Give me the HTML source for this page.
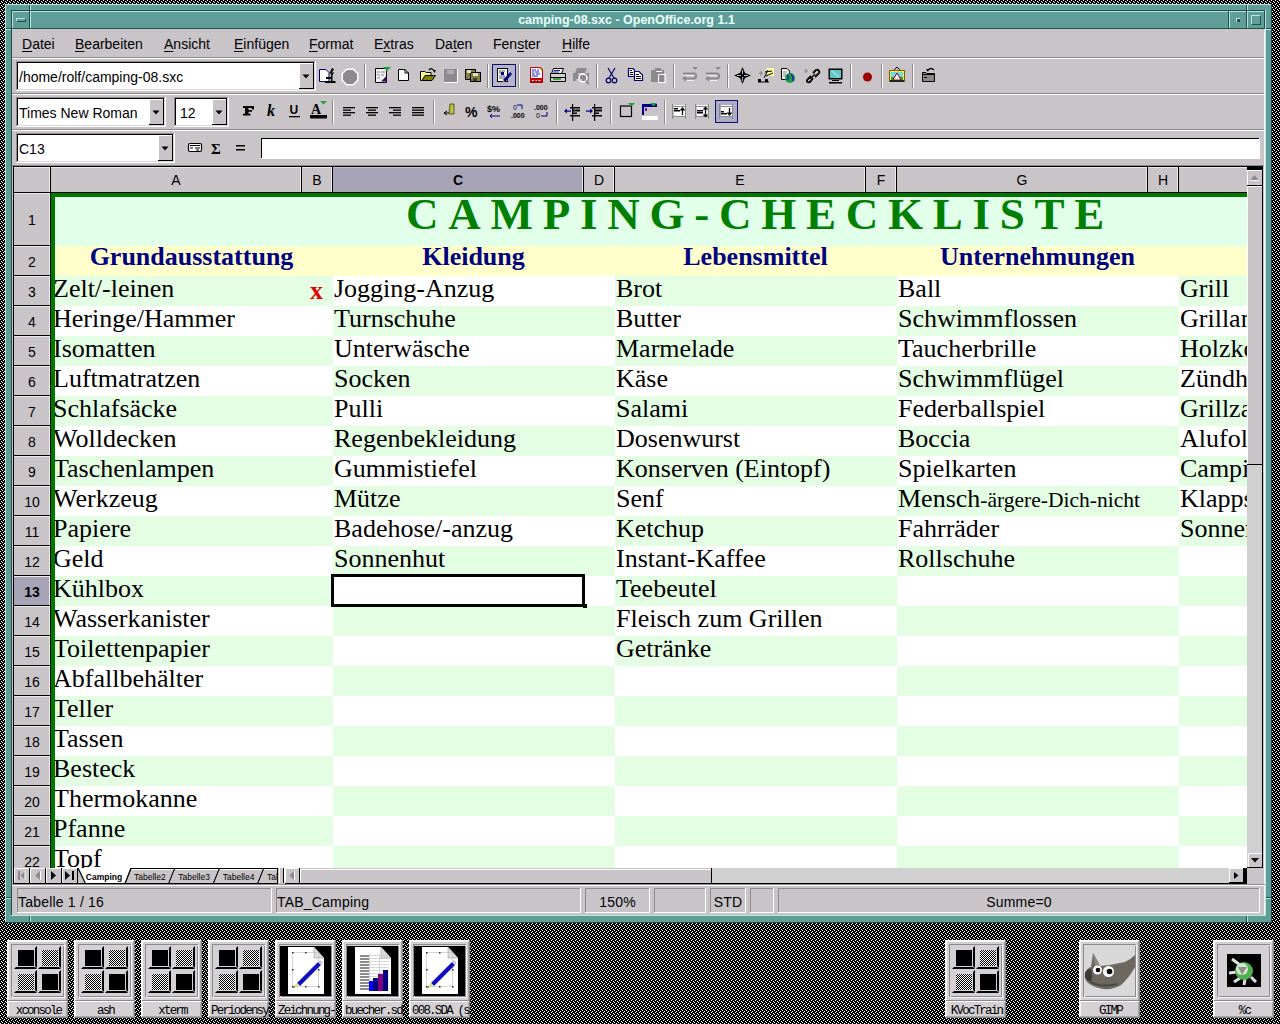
<!DOCTYPE html>
<html><head><meta charset="utf-8">
<style>
*{margin:0;padding:0;box-sizing:border-box}
html,body{width:1280px;height:1024px;overflow:hidden;position:relative;font-family:"Liberation Sans",sans-serif}
body{background:#000}
.a{position:absolute}
.t{white-space:nowrap;line-height:1}
.s{font-family:"Liberation Serif",serif}
.m{font-family:"Liberation Mono",monospace}
u{text-decoration:underline;text-underline-offset:2px}
</style></head><body>

<svg class="a" style="left:0;top:0" width="1280" height="1024"><defs><pattern id="p" width="4" height="4" patternUnits="userSpaceOnUse"><rect x="1" y="1" width="1" height="1" fill="#fff"/><rect x="2" y="2" width="1" height="1" fill="#fff"/><rect x="0" y="3" width="1" height="1" fill="#fff"/><rect x="3" y="0" width="1" height="1" fill="#fff"/></pattern></defs><rect width="1280" height="1024" fill="url(#p)"/></svg>
<div class="a" style="left:5px;top:4px;width:1267px;height:919px;background:#5f9e98"></div>
<div class="a" style="left:5px;top:4px;width:1266px;height:1px;background:#b8e4e0"></div>
<div class="a" style="left:5px;top:4px;width:1px;height:918px;background:#b8e4e0"></div>
<div class="a" style="left:5px;top:922px;width:1267px;height:1px;background:#1f4f4a"></div>
<div class="a" style="left:1271px;top:4px;width:1px;height:919px;background:#1f4f4a"></div>
<div class="a" style="left:11px;top:10px;width:1254px;height:1px;background:#1f4f4a"></div>
<div class="a" style="left:11px;top:10px;width:1px;height:905px;background:#1f4f4a"></div>
<div class="a" style="left:11px;top:915px;width:1255px;height:1px;background:#b8e4e0"></div>
<div class="a" style="left:1265px;top:10px;width:1px;height:906px;background:#b8e4e0"></div>
<div class="a" style="left:29px;top:5px;width:1px;height:5px;background:#1f4f4a"></div>
<div class="a" style="left:30px;top:5px;width:1px;height:5px;background:#b8e4e0"></div>
<div class="a" style="left:29px;top:916px;width:1px;height:6px;background:#1f4f4a"></div>
<div class="a" style="left:30px;top:916px;width:1px;height:6px;background:#b8e4e0"></div>
<div class="a" style="left:1246px;top:5px;width:1px;height:5px;background:#1f4f4a"></div>
<div class="a" style="left:1247px;top:5px;width:1px;height:5px;background:#b8e4e0"></div>
<div class="a" style="left:1246px;top:916px;width:1px;height:6px;background:#1f4f4a"></div>
<div class="a" style="left:1247px;top:916px;width:1px;height:6px;background:#b8e4e0"></div>
<div class="a" style="left:6px;top:28px;width:5px;height:1px;background:#1f4f4a"></div>
<div class="a" style="left:6px;top:29px;width:5px;height:1px;background:#b8e4e0"></div>
<div class="a" style="left:1266px;top:28px;width:5px;height:1px;background:#1f4f4a"></div>
<div class="a" style="left:1266px;top:29px;width:5px;height:1px;background:#b8e4e0"></div>
<div class="a" style="left:6px;top:897px;width:5px;height:1px;background:#1f4f4a"></div>
<div class="a" style="left:6px;top:898px;width:5px;height:1px;background:#b8e4e0"></div>
<div class="a" style="left:1266px;top:897px;width:5px;height:1px;background:#1f4f4a"></div>
<div class="a" style="left:1266px;top:898px;width:5px;height:1px;background:#b8e4e0"></div>
<div class="a" style="left:12px;top:11px;width:1253px;height:18px;background:#5f9e98"></div>
<div class="a" style="left:12px;top:11px;width:18px;height:1px;background:#b8e4e0"></div>
<div class="a" style="left:12px;top:11px;width:1px;height:18px;background:#b8e4e0"></div>
<div class="a" style="left:12px;top:28px;width:18px;height:1px;background:#1f4f4a"></div>
<div class="a" style="left:29px;top:11px;width:1px;height:18px;background:#1f4f4a"></div>
<div class="a" style="left:30px;top:11px;width:1199px;height:1px;background:#b8e4e0"></div>
<div class="a" style="left:30px;top:11px;width:1px;height:18px;background:#b8e4e0"></div>
<div class="a" style="left:30px;top:28px;width:1199px;height:1px;background:#1f4f4a"></div>
<div class="a" style="left:1228px;top:11px;width:1px;height:18px;background:#1f4f4a"></div>
<div class="a" style="left:1229px;top:11px;width:18px;height:1px;background:#b8e4e0"></div>
<div class="a" style="left:1229px;top:11px;width:1px;height:18px;background:#b8e4e0"></div>
<div class="a" style="left:1229px;top:28px;width:18px;height:1px;background:#1f4f4a"></div>
<div class="a" style="left:1246px;top:11px;width:1px;height:18px;background:#1f4f4a"></div>
<div class="a" style="left:1247px;top:11px;width:18px;height:1px;background:#b8e4e0"></div>
<div class="a" style="left:1247px;top:11px;width:1px;height:18px;background:#b8e4e0"></div>
<div class="a" style="left:1247px;top:28px;width:18px;height:1px;background:#1f4f4a"></div>
<div class="a" style="left:1264px;top:11px;width:1px;height:18px;background:#1f4f4a"></div>
<div class="a" style="left:16px;top:18px;width:10px;height:4px;background:#5f9e98;border-top:1px solid #b8e4e0;border-left:1px solid #b8e4e0;border-bottom:1px solid #1f4f4a;border-right:1px solid #1f4f4a"></div>
<div class="a" style="left:1236px;top:18px;width:4px;height:4px;background:#1f4f4a;border-top:1px solid #b8e4e0;border-left:1px solid #b8e4e0"></div>
<div class="a" style="left:1251px;top:15px;width:10px;height:10px;border-top:1px solid #b8e4e0;border-left:1px solid #b8e4e0;border-bottom:1px solid #1f4f4a;border-right:1px solid #1f4f4a"></div>
<div class="a t" style="left:27px;top:14px;width:1199px;text-align:center;color:#eafffc;font-weight:bold;font-size:12.5px">camping-08.sxc - OpenOffice.org 1.1</div>
<div class="a" style="left:12px;top:29px;width:1253px;height:886px;background:#c8c4c8"></div>
<div class="a" style="left:12px;top:57px;width:1253px;height:1px;background:#8c8a8c"></div>
<div class="a t" style="left:22px;top:37px;font-size:14px;color:#000"><u>D</u>atei</div>
<div class="a t" style="left:75px;top:37px;font-size:14px;color:#000"><u>B</u>earbeiten</div>
<div class="a t" style="left:164px;top:37px;font-size:14px;color:#000"><u>A</u>nsicht</div>
<div class="a t" style="left:234px;top:37px;font-size:14px;color:#000"><u>E</u>infügen</div>
<div class="a t" style="left:309px;top:37px;font-size:14px;color:#000"><u>F</u>ormat</div>
<div class="a t" style="left:374px;top:37px;font-size:14px;color:#000">E<u>x</u>tras</div>
<div class="a t" style="left:435px;top:37px;font-size:14px;color:#000">Da<u>t</u>en</div>
<div class="a t" style="left:493px;top:37px;font-size:14px;color:#000">Fen<u>s</u>ter</div>
<div class="a t" style="left:562px;top:37px;font-size:14px;color:#000"><u>H</u>ilfe</div>
<div class="a" style="left:12px;top:58px;width:1253px;height:1px;background:#fff"></div>
<div class="a" style="left:12px;top:93px;width:1253px;height:1px;background:#8c8a8c"></div>
<div class="a" style="left:12px;top:94px;width:1253px;height:1px;background:#fff"></div>
<div class="a" style="left:12px;top:129px;width:1253px;height:1px;background:#8c8a8c"></div>
<div class="a" style="left:12px;top:130px;width:1253px;height:1px;background:#fff"></div>
<div class="a" style="left:12px;top:165px;width:1253px;height:1px;background:#8c8a8c"></div>
<div class="a" style="left:16px;top:61px;width:300px;height:30px;background:#fff"></div>
<div class="a" style="left:16px;top:61px;width:299px;height:1px;background:#8c8a8c"></div>
<div class="a" style="left:16px;top:61px;width:1px;height:29px;background:#8c8a8c"></div>
<div class="a" style="left:17px;top:62px;width:298px;height:1px;background:#000"></div>
<div class="a" style="left:17px;top:62px;width:1px;height:28px;background:#000"></div>
<div class="a" style="left:16px;top:90px;width:300px;height:1px;background:#fff"></div>
<div class="a" style="left:315px;top:61px;width:1px;height:30px;background:#fff"></div>
<div class="a" style="left:17px;top:89px;width:298px;height:1px;background:#dcd8dc"></div>
<div class="a" style="left:314px;top:62px;width:1px;height:28px;background:#dcd8dc"></div>
<div class="a" style="left:299px;top:63px;width:15px;height:26px;background:#c8c4c8"></div>
<div class="a" style="left:299px;top:63px;width:14px;height:1px;background:#fff"></div>
<div class="a" style="left:299px;top:63px;width:1px;height:25px;background:#fff"></div>
<div class="a" style="left:299px;top:88px;width:15px;height:1px;background:#000"></div>
<div class="a" style="left:313px;top:63px;width:1px;height:26px;background:#000"></div>
<svg class="a" style="left:302px;top:74px" width="9" height="5"><path d="M0.5 0.5H7.5L4 4.5Z" fill="#000"/></svg>
<div class="a t" style="left:19px;top:70px;font-size:14px;color:#000">/home/rolf/camping-08.sxc</div>
<div class="a" style="left:16px;top:97px;width:150px;height:30px;background:#fff"></div>
<div class="a" style="left:16px;top:97px;width:149px;height:1px;background:#8c8a8c"></div>
<div class="a" style="left:16px;top:97px;width:1px;height:29px;background:#8c8a8c"></div>
<div class="a" style="left:17px;top:98px;width:148px;height:1px;background:#000"></div>
<div class="a" style="left:17px;top:98px;width:1px;height:28px;background:#000"></div>
<div class="a" style="left:16px;top:126px;width:150px;height:1px;background:#fff"></div>
<div class="a" style="left:165px;top:97px;width:1px;height:30px;background:#fff"></div>
<div class="a" style="left:17px;top:125px;width:148px;height:1px;background:#dcd8dc"></div>
<div class="a" style="left:164px;top:98px;width:1px;height:28px;background:#dcd8dc"></div>
<div class="a" style="left:149px;top:99px;width:15px;height:26px;background:#c8c4c8"></div>
<div class="a" style="left:149px;top:99px;width:14px;height:1px;background:#fff"></div>
<div class="a" style="left:149px;top:99px;width:1px;height:25px;background:#fff"></div>
<div class="a" style="left:149px;top:124px;width:15px;height:1px;background:#000"></div>
<div class="a" style="left:163px;top:99px;width:1px;height:26px;background:#000"></div>
<svg class="a" style="left:152px;top:110px" width="9" height="5"><path d="M0.5 0.5H7.5L4 4.5Z" fill="#000"/></svg>
<div class="a t" style="left:19px;top:106px;font-size:14px;color:#000">Times New Roman</div>
<div class="a" style="left:174px;top:97px;width:55px;height:30px;background:#fff"></div>
<div class="a" style="left:174px;top:97px;width:54px;height:1px;background:#8c8a8c"></div>
<div class="a" style="left:174px;top:97px;width:1px;height:29px;background:#8c8a8c"></div>
<div class="a" style="left:175px;top:98px;width:53px;height:1px;background:#000"></div>
<div class="a" style="left:175px;top:98px;width:1px;height:28px;background:#000"></div>
<div class="a" style="left:174px;top:126px;width:55px;height:1px;background:#fff"></div>
<div class="a" style="left:228px;top:97px;width:1px;height:30px;background:#fff"></div>
<div class="a" style="left:175px;top:125px;width:53px;height:1px;background:#dcd8dc"></div>
<div class="a" style="left:227px;top:98px;width:1px;height:28px;background:#dcd8dc"></div>
<div class="a" style="left:212px;top:99px;width:15px;height:26px;background:#c8c4c8"></div>
<div class="a" style="left:212px;top:99px;width:14px;height:1px;background:#fff"></div>
<div class="a" style="left:212px;top:99px;width:1px;height:25px;background:#fff"></div>
<div class="a" style="left:212px;top:124px;width:15px;height:1px;background:#000"></div>
<div class="a" style="left:226px;top:99px;width:1px;height:26px;background:#000"></div>
<svg class="a" style="left:215px;top:110px" width="9" height="5"><path d="M0.5 0.5H7.5L4 4.5Z" fill="#000"/></svg>
<div class="a t" style="left:180px;top:106px;font-size:14px;color:#000">12</div>
<div class="a" style="left:16px;top:133px;width:159px;height:30px;background:#fff"></div>
<div class="a" style="left:16px;top:133px;width:158px;height:1px;background:#8c8a8c"></div>
<div class="a" style="left:16px;top:133px;width:1px;height:29px;background:#8c8a8c"></div>
<div class="a" style="left:17px;top:134px;width:157px;height:1px;background:#000"></div>
<div class="a" style="left:17px;top:134px;width:1px;height:28px;background:#000"></div>
<div class="a" style="left:16px;top:162px;width:159px;height:1px;background:#fff"></div>
<div class="a" style="left:174px;top:133px;width:1px;height:30px;background:#fff"></div>
<div class="a" style="left:17px;top:161px;width:157px;height:1px;background:#dcd8dc"></div>
<div class="a" style="left:173px;top:134px;width:1px;height:28px;background:#dcd8dc"></div>
<div class="a" style="left:158px;top:135px;width:15px;height:26px;background:#c8c4c8"></div>
<div class="a" style="left:158px;top:135px;width:14px;height:1px;background:#fff"></div>
<div class="a" style="left:158px;top:135px;width:1px;height:25px;background:#fff"></div>
<div class="a" style="left:158px;top:160px;width:15px;height:1px;background:#000"></div>
<div class="a" style="left:172px;top:135px;width:1px;height:26px;background:#000"></div>
<svg class="a" style="left:161px;top:146px" width="9" height="5"><path d="M0.5 0.5H7.5L4 4.5Z" fill="#000"/></svg>
<div class="a t" style="left:19px;top:142px;font-size:14px;color:#000">C13</div>
<div class="a" style="left:261px;top:138px;width:999px;height:21px;background:#fff"></div>
<div class="a" style="left:261px;top:138px;width:998px;height:1px;background:#000"></div>
<div class="a" style="left:261px;top:138px;width:1px;height:20px;background:#000"></div>
<div class="a" style="left:261px;top:158px;width:999px;height:1px;background:#fff"></div>
<div class="a" style="left:1259px;top:138px;width:1px;height:21px;background:#fff"></div>
<div class="a" style="left:13px;top:166px;width:1234px;height:702px;background:#c8c4c8"></div>
<div class="a" style="left:13px;top:166px;width:1234px;height:1px;background:#000"></div>
<div class="a" style="left:13px;top:166px;width:1px;height:702px;background:#000"></div>
<div class="a" style="left:14px;top:167px;width:36px;height:1px;background:#ebe9eb"></div>
<div class="a" style="left:49px;top:167px;width:1px;height:25px;background:#ebe9eb"></div>
<div class="a" style="left:13px;top:192px;width:38px;height:1px;background:#000"></div>
<div class="a" style="left:50px;top:166px;width:1px;height:27px;background:#000"></div>
<div class="a" style="left:51px;top:167px;width:251px;height:25px;background:#c8c4c8"></div>
<div class="a" style="left:51px;top:167px;width:251px;height:1px;background:#ebe9eb"></div>
<div class="a" style="left:301px;top:167px;width:1px;height:25px;background:#000"></div>
<div class="a" style="left:300px;top:167px;width:1px;height:25px;background:#ebe9eb"></div>
<div class="a" style="left:51px;top:192px;width:251px;height:1px;background:#000"></div>
<div class="a t" style="left:51px;top:173px;width:250px;text-align:center;font-size:14px;color:#000;font-weight:normal">A</div>
<div class="a" style="left:302px;top:167px;width:31px;height:25px;background:#c8c4c8"></div>
<div class="a" style="left:302px;top:167px;width:31px;height:1px;background:#ebe9eb"></div>
<div class="a" style="left:332px;top:167px;width:1px;height:25px;background:#000"></div>
<div class="a" style="left:331px;top:167px;width:1px;height:25px;background:#ebe9eb"></div>
<div class="a" style="left:302px;top:192px;width:31px;height:1px;background:#000"></div>
<div class="a t" style="left:302px;top:173px;width:30px;text-align:center;font-size:14px;color:#000;font-weight:normal">B</div>
<div class="a" style="left:333px;top:167px;width:251px;height:25px;background:#a8a4b8"></div>
<div class="a" style="left:333px;top:167px;width:251px;height:1px;background:#c4c0d4"></div>
<div class="a" style="left:583px;top:167px;width:1px;height:25px;background:#000"></div>
<div class="a" style="left:582px;top:167px;width:1px;height:25px;background:#ebe9eb"></div>
<div class="a" style="left:333px;top:192px;width:251px;height:1px;background:#000"></div>
<div class="a t" style="left:333px;top:173px;width:250px;text-align:center;font-size:14px;color:#000;font-weight:bold">C</div>
<div class="a" style="left:584px;top:167px;width:31px;height:25px;background:#c8c4c8"></div>
<div class="a" style="left:584px;top:167px;width:31px;height:1px;background:#ebe9eb"></div>
<div class="a" style="left:614px;top:167px;width:1px;height:25px;background:#000"></div>
<div class="a" style="left:613px;top:167px;width:1px;height:25px;background:#ebe9eb"></div>
<div class="a" style="left:584px;top:192px;width:31px;height:1px;background:#000"></div>
<div class="a t" style="left:584px;top:173px;width:30px;text-align:center;font-size:14px;color:#000;font-weight:normal">D</div>
<div class="a" style="left:615px;top:167px;width:251px;height:25px;background:#c8c4c8"></div>
<div class="a" style="left:615px;top:167px;width:251px;height:1px;background:#ebe9eb"></div>
<div class="a" style="left:865px;top:167px;width:1px;height:25px;background:#000"></div>
<div class="a" style="left:864px;top:167px;width:1px;height:25px;background:#ebe9eb"></div>
<div class="a" style="left:615px;top:192px;width:251px;height:1px;background:#000"></div>
<div class="a t" style="left:615px;top:173px;width:250px;text-align:center;font-size:14px;color:#000;font-weight:normal">E</div>
<div class="a" style="left:866px;top:167px;width:31px;height:25px;background:#c8c4c8"></div>
<div class="a" style="left:866px;top:167px;width:31px;height:1px;background:#ebe9eb"></div>
<div class="a" style="left:896px;top:167px;width:1px;height:25px;background:#000"></div>
<div class="a" style="left:895px;top:167px;width:1px;height:25px;background:#ebe9eb"></div>
<div class="a" style="left:866px;top:192px;width:31px;height:1px;background:#000"></div>
<div class="a t" style="left:866px;top:173px;width:30px;text-align:center;font-size:14px;color:#000;font-weight:normal">F</div>
<div class="a" style="left:897px;top:167px;width:251px;height:25px;background:#c8c4c8"></div>
<div class="a" style="left:897px;top:167px;width:251px;height:1px;background:#ebe9eb"></div>
<div class="a" style="left:1147px;top:167px;width:1px;height:25px;background:#000"></div>
<div class="a" style="left:1146px;top:167px;width:1px;height:25px;background:#ebe9eb"></div>
<div class="a" style="left:897px;top:192px;width:251px;height:1px;background:#000"></div>
<div class="a t" style="left:897px;top:173px;width:250px;text-align:center;font-size:14px;color:#000;font-weight:normal">G</div>
<div class="a" style="left:1148px;top:167px;width:31px;height:25px;background:#c8c4c8"></div>
<div class="a" style="left:1148px;top:167px;width:31px;height:1px;background:#ebe9eb"></div>
<div class="a" style="left:1178px;top:167px;width:1px;height:25px;background:#000"></div>
<div class="a" style="left:1177px;top:167px;width:1px;height:25px;background:#ebe9eb"></div>
<div class="a" style="left:1148px;top:192px;width:31px;height:1px;background:#000"></div>
<div class="a t" style="left:1148px;top:173px;width:30px;text-align:center;font-size:14px;color:#000;font-weight:normal">H</div>
<div class="a" style="left:1179px;top:167px;width:68px;height:25px;background:#c8c4c8"></div>
<div class="a" style="left:1179px;top:167px;width:68px;height:1px;background:#ebe9eb"></div>
<div class="a" style="left:1179px;top:192px;width:68px;height:1px;background:#000"></div>
<div class="a" style="left:14px;top:193px;width:36px;height:53px;background:#c8c4c8"></div>
<div class="a" style="left:14px;top:193px;width:35px;height:1px;background:#ebe9eb"></div>
<div class="a" style="left:49px;top:193px;width:1px;height:53px;background:#ebe9eb"></div>
<div class="a" style="left:13px;top:245px;width:38px;height:1px;background:#000"></div>
<div class="a t" style="left:14px;top:213px;width:36px;text-align:center;font-size:14px;color:#000;font-weight:normal">1</div>
<div class="a" style="left:14px;top:246px;width:36px;height:30px;background:#c8c4c8"></div>
<div class="a" style="left:14px;top:246px;width:35px;height:1px;background:#ebe9eb"></div>
<div class="a" style="left:49px;top:246px;width:1px;height:30px;background:#ebe9eb"></div>
<div class="a" style="left:13px;top:275px;width:38px;height:1px;background:#000"></div>
<div class="a t" style="left:14px;top:255px;width:36px;text-align:center;font-size:14px;color:#000;font-weight:normal">2</div>
<div class="a" style="left:14px;top:276px;width:36px;height:30px;background:#c8c4c8"></div>
<div class="a" style="left:14px;top:276px;width:35px;height:1px;background:#ebe9eb"></div>
<div class="a" style="left:49px;top:276px;width:1px;height:30px;background:#ebe9eb"></div>
<div class="a" style="left:13px;top:305px;width:38px;height:1px;background:#000"></div>
<div class="a t" style="left:14px;top:285px;width:36px;text-align:center;font-size:14px;color:#000;font-weight:normal">3</div>
<div class="a" style="left:14px;top:306px;width:36px;height:30px;background:#c8c4c8"></div>
<div class="a" style="left:14px;top:306px;width:35px;height:1px;background:#ebe9eb"></div>
<div class="a" style="left:49px;top:306px;width:1px;height:30px;background:#ebe9eb"></div>
<div class="a" style="left:13px;top:335px;width:38px;height:1px;background:#000"></div>
<div class="a t" style="left:14px;top:315px;width:36px;text-align:center;font-size:14px;color:#000;font-weight:normal">4</div>
<div class="a" style="left:14px;top:336px;width:36px;height:30px;background:#c8c4c8"></div>
<div class="a" style="left:14px;top:336px;width:35px;height:1px;background:#ebe9eb"></div>
<div class="a" style="left:49px;top:336px;width:1px;height:30px;background:#ebe9eb"></div>
<div class="a" style="left:13px;top:365px;width:38px;height:1px;background:#000"></div>
<div class="a t" style="left:14px;top:345px;width:36px;text-align:center;font-size:14px;color:#000;font-weight:normal">5</div>
<div class="a" style="left:14px;top:366px;width:36px;height:30px;background:#c8c4c8"></div>
<div class="a" style="left:14px;top:366px;width:35px;height:1px;background:#ebe9eb"></div>
<div class="a" style="left:49px;top:366px;width:1px;height:30px;background:#ebe9eb"></div>
<div class="a" style="left:13px;top:395px;width:38px;height:1px;background:#000"></div>
<div class="a t" style="left:14px;top:375px;width:36px;text-align:center;font-size:14px;color:#000;font-weight:normal">6</div>
<div class="a" style="left:14px;top:396px;width:36px;height:30px;background:#c8c4c8"></div>
<div class="a" style="left:14px;top:396px;width:35px;height:1px;background:#ebe9eb"></div>
<div class="a" style="left:49px;top:396px;width:1px;height:30px;background:#ebe9eb"></div>
<div class="a" style="left:13px;top:425px;width:38px;height:1px;background:#000"></div>
<div class="a t" style="left:14px;top:405px;width:36px;text-align:center;font-size:14px;color:#000;font-weight:normal">7</div>
<div class="a" style="left:14px;top:426px;width:36px;height:30px;background:#c8c4c8"></div>
<div class="a" style="left:14px;top:426px;width:35px;height:1px;background:#ebe9eb"></div>
<div class="a" style="left:49px;top:426px;width:1px;height:30px;background:#ebe9eb"></div>
<div class="a" style="left:13px;top:455px;width:38px;height:1px;background:#000"></div>
<div class="a t" style="left:14px;top:435px;width:36px;text-align:center;font-size:14px;color:#000;font-weight:normal">8</div>
<div class="a" style="left:14px;top:456px;width:36px;height:30px;background:#c8c4c8"></div>
<div class="a" style="left:14px;top:456px;width:35px;height:1px;background:#ebe9eb"></div>
<div class="a" style="left:49px;top:456px;width:1px;height:30px;background:#ebe9eb"></div>
<div class="a" style="left:13px;top:485px;width:38px;height:1px;background:#000"></div>
<div class="a t" style="left:14px;top:465px;width:36px;text-align:center;font-size:14px;color:#000;font-weight:normal">9</div>
<div class="a" style="left:14px;top:486px;width:36px;height:30px;background:#c8c4c8"></div>
<div class="a" style="left:14px;top:486px;width:35px;height:1px;background:#ebe9eb"></div>
<div class="a" style="left:49px;top:486px;width:1px;height:30px;background:#ebe9eb"></div>
<div class="a" style="left:13px;top:515px;width:38px;height:1px;background:#000"></div>
<div class="a t" style="left:14px;top:495px;width:36px;text-align:center;font-size:14px;color:#000;font-weight:normal">10</div>
<div class="a" style="left:14px;top:516px;width:36px;height:30px;background:#c8c4c8"></div>
<div class="a" style="left:14px;top:516px;width:35px;height:1px;background:#ebe9eb"></div>
<div class="a" style="left:49px;top:516px;width:1px;height:30px;background:#ebe9eb"></div>
<div class="a" style="left:13px;top:545px;width:38px;height:1px;background:#000"></div>
<div class="a t" style="left:14px;top:525px;width:36px;text-align:center;font-size:14px;color:#000;font-weight:normal">11</div>
<div class="a" style="left:14px;top:546px;width:36px;height:30px;background:#c8c4c8"></div>
<div class="a" style="left:14px;top:546px;width:35px;height:1px;background:#ebe9eb"></div>
<div class="a" style="left:49px;top:546px;width:1px;height:30px;background:#ebe9eb"></div>
<div class="a" style="left:13px;top:575px;width:38px;height:1px;background:#000"></div>
<div class="a t" style="left:14px;top:555px;width:36px;text-align:center;font-size:14px;color:#000;font-weight:normal">12</div>
<div class="a" style="left:14px;top:576px;width:36px;height:30px;background:#a8a4b8"></div>
<div class="a" style="left:14px;top:576px;width:35px;height:1px;background:#ebe9eb"></div>
<div class="a" style="left:49px;top:576px;width:1px;height:30px;background:#ebe9eb"></div>
<div class="a" style="left:13px;top:605px;width:38px;height:1px;background:#000"></div>
<div class="a t" style="left:14px;top:585px;width:36px;text-align:center;font-size:14px;color:#000;font-weight:bold">13</div>
<div class="a" style="left:14px;top:606px;width:36px;height:30px;background:#c8c4c8"></div>
<div class="a" style="left:14px;top:606px;width:35px;height:1px;background:#ebe9eb"></div>
<div class="a" style="left:49px;top:606px;width:1px;height:30px;background:#ebe9eb"></div>
<div class="a" style="left:13px;top:635px;width:38px;height:1px;background:#000"></div>
<div class="a t" style="left:14px;top:615px;width:36px;text-align:center;font-size:14px;color:#000;font-weight:normal">14</div>
<div class="a" style="left:14px;top:636px;width:36px;height:30px;background:#c8c4c8"></div>
<div class="a" style="left:14px;top:636px;width:35px;height:1px;background:#ebe9eb"></div>
<div class="a" style="left:49px;top:636px;width:1px;height:30px;background:#ebe9eb"></div>
<div class="a" style="left:13px;top:665px;width:38px;height:1px;background:#000"></div>
<div class="a t" style="left:14px;top:645px;width:36px;text-align:center;font-size:14px;color:#000;font-weight:normal">15</div>
<div class="a" style="left:14px;top:666px;width:36px;height:30px;background:#c8c4c8"></div>
<div class="a" style="left:14px;top:666px;width:35px;height:1px;background:#ebe9eb"></div>
<div class="a" style="left:49px;top:666px;width:1px;height:30px;background:#ebe9eb"></div>
<div class="a" style="left:13px;top:695px;width:38px;height:1px;background:#000"></div>
<div class="a t" style="left:14px;top:675px;width:36px;text-align:center;font-size:14px;color:#000;font-weight:normal">16</div>
<div class="a" style="left:14px;top:696px;width:36px;height:30px;background:#c8c4c8"></div>
<div class="a" style="left:14px;top:696px;width:35px;height:1px;background:#ebe9eb"></div>
<div class="a" style="left:49px;top:696px;width:1px;height:30px;background:#ebe9eb"></div>
<div class="a" style="left:13px;top:725px;width:38px;height:1px;background:#000"></div>
<div class="a t" style="left:14px;top:705px;width:36px;text-align:center;font-size:14px;color:#000;font-weight:normal">17</div>
<div class="a" style="left:14px;top:726px;width:36px;height:30px;background:#c8c4c8"></div>
<div class="a" style="left:14px;top:726px;width:35px;height:1px;background:#ebe9eb"></div>
<div class="a" style="left:49px;top:726px;width:1px;height:30px;background:#ebe9eb"></div>
<div class="a" style="left:13px;top:755px;width:38px;height:1px;background:#000"></div>
<div class="a t" style="left:14px;top:735px;width:36px;text-align:center;font-size:14px;color:#000;font-weight:normal">18</div>
<div class="a" style="left:14px;top:756px;width:36px;height:30px;background:#c8c4c8"></div>
<div class="a" style="left:14px;top:756px;width:35px;height:1px;background:#ebe9eb"></div>
<div class="a" style="left:49px;top:756px;width:1px;height:30px;background:#ebe9eb"></div>
<div class="a" style="left:13px;top:785px;width:38px;height:1px;background:#000"></div>
<div class="a t" style="left:14px;top:765px;width:36px;text-align:center;font-size:14px;color:#000;font-weight:normal">19</div>
<div class="a" style="left:14px;top:786px;width:36px;height:30px;background:#c8c4c8"></div>
<div class="a" style="left:14px;top:786px;width:35px;height:1px;background:#ebe9eb"></div>
<div class="a" style="left:49px;top:786px;width:1px;height:30px;background:#ebe9eb"></div>
<div class="a" style="left:13px;top:815px;width:38px;height:1px;background:#000"></div>
<div class="a t" style="left:14px;top:795px;width:36px;text-align:center;font-size:14px;color:#000;font-weight:normal">20</div>
<div class="a" style="left:14px;top:816px;width:36px;height:30px;background:#c8c4c8"></div>
<div class="a" style="left:14px;top:816px;width:35px;height:1px;background:#ebe9eb"></div>
<div class="a" style="left:49px;top:816px;width:1px;height:30px;background:#ebe9eb"></div>
<div class="a" style="left:13px;top:845px;width:38px;height:1px;background:#000"></div>
<div class="a t" style="left:14px;top:825px;width:36px;text-align:center;font-size:14px;color:#000;font-weight:normal">21</div>
<div class="a" style="left:14px;top:846px;width:36px;height:22px;background:#c8c4c8"></div>
<div class="a" style="left:14px;top:846px;width:35px;height:1px;background:#ebe9eb"></div>
<div class="a" style="left:49px;top:846px;width:1px;height:22px;background:#ebe9eb"></div>
<div class="a t" style="left:14px;top:855px;width:36px;text-align:center;font-size:14px;color:#000;font-weight:normal">22</div>
<div class="a" style="left:50px;top:193px;width:1px;height:675px;background:#000"></div>
<div class="a" style="left:51px;top:193px;width:1196px;height:53px;background:#e2ffea"></div>
<div class="a" style="left:51px;top:246px;width:1196px;height:30px;background:#ffffcc"></div>
<div class="a" style="left:51px;top:276px;width:282px;height:30px;background:#e4fee4"></div>
<div class="a" style="left:333px;top:276px;width:282px;height:30px;background:#fff"></div>
<div class="a" style="left:615px;top:276px;width:282px;height:30px;background:#e4fee4"></div>
<div class="a" style="left:897px;top:276px;width:282px;height:30px;background:#fff"></div>
<div class="a" style="left:1179px;top:276px;width:68px;height:30px;background:#e4fee4"></div>
<div class="a" style="left:51px;top:306px;width:282px;height:30px;background:#fff"></div>
<div class="a" style="left:333px;top:306px;width:282px;height:30px;background:#e4fee4"></div>
<div class="a" style="left:615px;top:306px;width:282px;height:30px;background:#fff"></div>
<div class="a" style="left:897px;top:306px;width:282px;height:30px;background:#e4fee4"></div>
<div class="a" style="left:1179px;top:306px;width:68px;height:30px;background:#fff"></div>
<div class="a" style="left:51px;top:336px;width:282px;height:30px;background:#e4fee4"></div>
<div class="a" style="left:333px;top:336px;width:282px;height:30px;background:#fff"></div>
<div class="a" style="left:615px;top:336px;width:282px;height:30px;background:#e4fee4"></div>
<div class="a" style="left:897px;top:336px;width:282px;height:30px;background:#fff"></div>
<div class="a" style="left:1179px;top:336px;width:68px;height:30px;background:#e4fee4"></div>
<div class="a" style="left:51px;top:366px;width:282px;height:30px;background:#fff"></div>
<div class="a" style="left:333px;top:366px;width:282px;height:30px;background:#e4fee4"></div>
<div class="a" style="left:615px;top:366px;width:282px;height:30px;background:#fff"></div>
<div class="a" style="left:897px;top:366px;width:282px;height:30px;background:#e4fee4"></div>
<div class="a" style="left:1179px;top:366px;width:68px;height:30px;background:#fff"></div>
<div class="a" style="left:51px;top:396px;width:282px;height:30px;background:#e4fee4"></div>
<div class="a" style="left:333px;top:396px;width:282px;height:30px;background:#fff"></div>
<div class="a" style="left:615px;top:396px;width:282px;height:30px;background:#e4fee4"></div>
<div class="a" style="left:897px;top:396px;width:282px;height:30px;background:#fff"></div>
<div class="a" style="left:1179px;top:396px;width:68px;height:30px;background:#e4fee4"></div>
<div class="a" style="left:51px;top:426px;width:282px;height:30px;background:#fff"></div>
<div class="a" style="left:333px;top:426px;width:282px;height:30px;background:#e4fee4"></div>
<div class="a" style="left:615px;top:426px;width:282px;height:30px;background:#fff"></div>
<div class="a" style="left:897px;top:426px;width:282px;height:30px;background:#e4fee4"></div>
<div class="a" style="left:1179px;top:426px;width:68px;height:30px;background:#fff"></div>
<div class="a" style="left:51px;top:456px;width:282px;height:30px;background:#e4fee4"></div>
<div class="a" style="left:333px;top:456px;width:282px;height:30px;background:#fff"></div>
<div class="a" style="left:615px;top:456px;width:282px;height:30px;background:#e4fee4"></div>
<div class="a" style="left:897px;top:456px;width:282px;height:30px;background:#fff"></div>
<div class="a" style="left:1179px;top:456px;width:68px;height:30px;background:#e4fee4"></div>
<div class="a" style="left:51px;top:486px;width:282px;height:30px;background:#fff"></div>
<div class="a" style="left:333px;top:486px;width:282px;height:30px;background:#e4fee4"></div>
<div class="a" style="left:615px;top:486px;width:282px;height:30px;background:#fff"></div>
<div class="a" style="left:897px;top:486px;width:282px;height:30px;background:#e4fee4"></div>
<div class="a" style="left:1179px;top:486px;width:68px;height:30px;background:#fff"></div>
<div class="a" style="left:51px;top:516px;width:282px;height:30px;background:#e4fee4"></div>
<div class="a" style="left:333px;top:516px;width:282px;height:30px;background:#fff"></div>
<div class="a" style="left:615px;top:516px;width:282px;height:30px;background:#e4fee4"></div>
<div class="a" style="left:897px;top:516px;width:282px;height:30px;background:#fff"></div>
<div class="a" style="left:1179px;top:516px;width:68px;height:30px;background:#e4fee4"></div>
<div class="a" style="left:51px;top:546px;width:282px;height:30px;background:#fff"></div>
<div class="a" style="left:333px;top:546px;width:282px;height:30px;background:#e4fee4"></div>
<div class="a" style="left:615px;top:546px;width:282px;height:30px;background:#fff"></div>
<div class="a" style="left:897px;top:546px;width:282px;height:30px;background:#e4fee4"></div>
<div class="a" style="left:1179px;top:546px;width:68px;height:30px;background:#fff"></div>
<div class="a" style="left:51px;top:576px;width:282px;height:30px;background:#e4fee4"></div>
<div class="a" style="left:333px;top:576px;width:282px;height:30px;background:#fff"></div>
<div class="a" style="left:615px;top:576px;width:282px;height:30px;background:#e4fee4"></div>
<div class="a" style="left:897px;top:576px;width:282px;height:30px;background:#fff"></div>
<div class="a" style="left:1179px;top:576px;width:68px;height:30px;background:#e4fee4"></div>
<div class="a" style="left:51px;top:606px;width:282px;height:30px;background:#fff"></div>
<div class="a" style="left:333px;top:606px;width:282px;height:30px;background:#e4fee4"></div>
<div class="a" style="left:615px;top:606px;width:282px;height:30px;background:#fff"></div>
<div class="a" style="left:897px;top:606px;width:282px;height:30px;background:#e4fee4"></div>
<div class="a" style="left:1179px;top:606px;width:68px;height:30px;background:#fff"></div>
<div class="a" style="left:51px;top:636px;width:282px;height:30px;background:#e4fee4"></div>
<div class="a" style="left:333px;top:636px;width:282px;height:30px;background:#fff"></div>
<div class="a" style="left:615px;top:636px;width:282px;height:30px;background:#e4fee4"></div>
<div class="a" style="left:897px;top:636px;width:282px;height:30px;background:#fff"></div>
<div class="a" style="left:1179px;top:636px;width:68px;height:30px;background:#e4fee4"></div>
<div class="a" style="left:51px;top:666px;width:282px;height:30px;background:#fff"></div>
<div class="a" style="left:333px;top:666px;width:282px;height:30px;background:#e4fee4"></div>
<div class="a" style="left:615px;top:666px;width:282px;height:30px;background:#fff"></div>
<div class="a" style="left:897px;top:666px;width:282px;height:30px;background:#e4fee4"></div>
<div class="a" style="left:1179px;top:666px;width:68px;height:30px;background:#fff"></div>
<div class="a" style="left:51px;top:696px;width:282px;height:30px;background:#e4fee4"></div>
<div class="a" style="left:333px;top:696px;width:282px;height:30px;background:#fff"></div>
<div class="a" style="left:615px;top:696px;width:282px;height:30px;background:#e4fee4"></div>
<div class="a" style="left:897px;top:696px;width:282px;height:30px;background:#fff"></div>
<div class="a" style="left:1179px;top:696px;width:68px;height:30px;background:#e4fee4"></div>
<div class="a" style="left:51px;top:726px;width:282px;height:30px;background:#fff"></div>
<div class="a" style="left:333px;top:726px;width:282px;height:30px;background:#e4fee4"></div>
<div class="a" style="left:615px;top:726px;width:282px;height:30px;background:#fff"></div>
<div class="a" style="left:897px;top:726px;width:282px;height:30px;background:#e4fee4"></div>
<div class="a" style="left:1179px;top:726px;width:68px;height:30px;background:#fff"></div>
<div class="a" style="left:51px;top:756px;width:282px;height:30px;background:#e4fee4"></div>
<div class="a" style="left:333px;top:756px;width:282px;height:30px;background:#fff"></div>
<div class="a" style="left:615px;top:756px;width:282px;height:30px;background:#e4fee4"></div>
<div class="a" style="left:897px;top:756px;width:282px;height:30px;background:#fff"></div>
<div class="a" style="left:1179px;top:756px;width:68px;height:30px;background:#e4fee4"></div>
<div class="a" style="left:51px;top:786px;width:282px;height:30px;background:#fff"></div>
<div class="a" style="left:333px;top:786px;width:282px;height:30px;background:#e4fee4"></div>
<div class="a" style="left:615px;top:786px;width:282px;height:30px;background:#fff"></div>
<div class="a" style="left:897px;top:786px;width:282px;height:30px;background:#e4fee4"></div>
<div class="a" style="left:1179px;top:786px;width:68px;height:30px;background:#fff"></div>
<div class="a" style="left:51px;top:816px;width:282px;height:30px;background:#e4fee4"></div>
<div class="a" style="left:333px;top:816px;width:282px;height:30px;background:#fff"></div>
<div class="a" style="left:615px;top:816px;width:282px;height:30px;background:#e4fee4"></div>
<div class="a" style="left:897px;top:816px;width:282px;height:30px;background:#fff"></div>
<div class="a" style="left:1179px;top:816px;width:68px;height:30px;background:#e4fee4"></div>
<div class="a" style="left:51px;top:846px;width:282px;height:22px;background:#fff"></div>
<div class="a" style="left:333px;top:846px;width:282px;height:22px;background:#e4fee4"></div>
<div class="a" style="left:615px;top:846px;width:282px;height:22px;background:#fff"></div>
<div class="a" style="left:897px;top:846px;width:282px;height:22px;background:#e4fee4"></div>
<div class="a" style="left:1179px;top:846px;width:68px;height:22px;background:#fff"></div>
<div class="a" style="left:51px;top:193px;width:1196px;height:4px;background:#007800"></div>
<div class="a" style="left:51px;top:193px;width:4px;height:675px;background:#007800"></div>
<div class="a" style="left:51px;top:193px;width:1196px;height:675px;overflow:hidden">
<div class="a t s" style="left:2px;top:83px;font-size:26px;color:#000">Zelt/-leinen</div>
<div class="a t s" style="left:2px;top:113px;font-size:26px;color:#000">Heringe/Hammer</div>
<div class="a t s" style="left:2px;top:143px;font-size:26px;color:#000">Isomatten</div>
<div class="a t s" style="left:2px;top:173px;font-size:26px;color:#000">Luftmatratzen</div>
<div class="a t s" style="left:2px;top:203px;font-size:26px;color:#000">Schlafsäcke</div>
<div class="a t s" style="left:2px;top:233px;font-size:26px;color:#000">Wolldecken</div>
<div class="a t s" style="left:2px;top:263px;font-size:26px;color:#000">Taschenlampen</div>
<div class="a t s" style="left:2px;top:293px;font-size:26px;color:#000">Werkzeug</div>
<div class="a t s" style="left:2px;top:323px;font-size:26px;color:#000">Papiere</div>
<div class="a t s" style="left:2px;top:353px;font-size:26px;color:#000">Geld</div>
<div class="a t s" style="left:2px;top:383px;font-size:26px;color:#000">Kühlbox</div>
<div class="a t s" style="left:2px;top:413px;font-size:26px;color:#000">Wasserkanister</div>
<div class="a t s" style="left:2px;top:443px;font-size:26px;color:#000">Toilettenpapier</div>
<div class="a t s" style="left:2px;top:473px;font-size:26px;color:#000">Abfallbehälter</div>
<div class="a t s" style="left:2px;top:503px;font-size:26px;color:#000">Teller</div>
<div class="a t s" style="left:2px;top:533px;font-size:26px;color:#000">Tassen</div>
<div class="a t s" style="left:2px;top:563px;font-size:26px;color:#000">Besteck</div>
<div class="a t s" style="left:2px;top:593px;font-size:26px;color:#000">Thermokanne</div>
<div class="a t s" style="left:2px;top:623px;font-size:26px;color:#000">Pfanne</div>
<div class="a t s" style="left:2px;top:653px;font-size:26px;color:#000">Topf</div>
<div class="a t s" style="left:283px;top:83px;font-size:26px;color:#000">Jogging-Anzug</div>
<div class="a t s" style="left:283px;top:113px;font-size:26px;color:#000">Turnschuhe</div>
<div class="a t s" style="left:283px;top:143px;font-size:26px;color:#000">Unterwäsche</div>
<div class="a t s" style="left:283px;top:173px;font-size:26px;color:#000">Socken</div>
<div class="a t s" style="left:283px;top:203px;font-size:26px;color:#000">Pulli</div>
<div class="a t s" style="left:283px;top:233px;font-size:26px;color:#000">Regenbekleidung</div>
<div class="a t s" style="left:283px;top:263px;font-size:26px;color:#000">Gummistiefel</div>
<div class="a t s" style="left:283px;top:293px;font-size:26px;color:#000">Mütze</div>
<div class="a t s" style="left:283px;top:323px;font-size:26px;color:#000">Badehose/-anzug</div>
<div class="a t s" style="left:283px;top:353px;font-size:26px;color:#000">Sonnenhut</div>
<div class="a t s" style="left:565px;top:83px;font-size:26px;color:#000">Brot</div>
<div class="a t s" style="left:565px;top:113px;font-size:26px;color:#000">Butter</div>
<div class="a t s" style="left:565px;top:143px;font-size:26px;color:#000">Marmelade</div>
<div class="a t s" style="left:565px;top:173px;font-size:26px;color:#000">Käse</div>
<div class="a t s" style="left:565px;top:203px;font-size:26px;color:#000">Salami</div>
<div class="a t s" style="left:565px;top:233px;font-size:26px;color:#000">Dosenwurst</div>
<div class="a t s" style="left:565px;top:263px;font-size:26px;color:#000">Konserven (Eintopf)</div>
<div class="a t s" style="left:565px;top:293px;font-size:26px;color:#000">Senf</div>
<div class="a t s" style="left:565px;top:323px;font-size:26px;color:#000">Ketchup</div>
<div class="a t s" style="left:565px;top:353px;font-size:26px;color:#000">Instant-Kaffee</div>
<div class="a t s" style="left:565px;top:383px;font-size:26px;color:#000">Teebeutel</div>
<div class="a t s" style="left:565px;top:413px;font-size:26px;color:#000">Fleisch zum Grillen</div>
<div class="a t s" style="left:565px;top:443px;font-size:26px;color:#000">Getränke</div>
<div class="a t s" style="left:847px;top:83px;font-size:26px;color:#000">Ball</div>
<div class="a t s" style="left:847px;top:113px;font-size:26px;color:#000">Schwimmflossen</div>
<div class="a t s" style="left:847px;top:143px;font-size:26px;color:#000">Taucherbrille</div>
<div class="a t s" style="left:847px;top:173px;font-size:26px;color:#000">Schwimmflügel</div>
<div class="a t s" style="left:847px;top:203px;font-size:26px;color:#000">Federballspiel</div>
<div class="a t s" style="left:847px;top:233px;font-size:26px;color:#000">Boccia</div>
<div class="a t s" style="left:847px;top:263px;font-size:26px;color:#000">Spielkarten</div>
<div class="a t s" style="left:847px;top:293px;font-size:26px;color:#000">Mensch<span style="font-size:21.5px">-ärgere-Dich-nicht</span></div>
<div class="a t s" style="left:847px;top:323px;font-size:26px;color:#000">Fahrräder</div>
<div class="a t s" style="left:847px;top:353px;font-size:26px;color:#000">Rollschuhe</div>
<div class="a t s" style="left:1129px;top:83px;font-size:26px;color:#000">Grill</div>
<div class="a t s" style="left:1129px;top:113px;font-size:26px;color:#000">Grillanzünder</div>
<div class="a t s" style="left:1129px;top:143px;font-size:26px;color:#000">Holzkohle</div>
<div class="a t s" style="left:1129px;top:173px;font-size:26px;color:#000">Zündhölzer</div>
<div class="a t s" style="left:1129px;top:203px;font-size:26px;color:#000">Grillzange</div>
<div class="a t s" style="left:1129px;top:233px;font-size:26px;color:#000">Alufolie</div>
<div class="a t s" style="left:1129px;top:263px;font-size:26px;color:#000">Campingkocher</div>
<div class="a t s" style="left:1129px;top:293px;font-size:26px;color:#000">Klappstühle</div>
<div class="a t s" style="left:1129px;top:323px;font-size:26px;color:#000">Sonnenschirm</div>
<div class="a t s" style="left:259px;top:85px;font-size:26px;color:#e00000;font-weight:bold">x</div>
<div class="a t s" style="left:-59.5px;top:51px;width:400px;text-align:center;font-size:26px;font-weight:bold;color:#000080">Grundausstattung</div>
<div class="a t s" style="left:222.5px;top:51px;width:400px;text-align:center;font-size:26px;font-weight:bold;color:#000080">Kleidung</div>
<div class="a t s" style="left:504.5px;top:51px;width:400px;text-align:center;font-size:26px;font-weight:bold;color:#000080">Lebensmittel</div>
<div class="a t s" style="left:786.5px;top:51px;width:400px;text-align:center;font-size:26px;font-weight:bold;color:#000080">Unternehmungen</div>
<div class="a t s" style="left:355px;top:-1px;font-size:45px;font-weight:bold;color:#007f00;letter-spacing:9.75px">CAMPING-CHECKLISTE</div>
</div>
<div class="a" style="left:51px;top:193px;width:1196px;height:4px;background:#007800"></div>
<div class="a" style="left:51px;top:193px;width:4px;height:675px;background:#007800"></div>
<div class="a" style="left:331px;top:574px;width:254px;height:33px;border:3px solid #000"></div>
<div class="a" style="left:583px;top:604px;width:4px;height:4px;background:#000"></div>
<div class="a" style="left:13px;top:868px;width:1251px;height:16px;background:#c8c4c8"></div>
<div class="a" style="left:13px;top:868px;width:1px;height:16px;background:#000"></div>
<div class="a" style="left:13px;top:883px;width:265px;height:1px;background:#000"></div>
<div class="a" style="left:14px;top:868px;width:16px;height:15px;background:#c8c4c8"></div>
<div class="a" style="left:14px;top:868px;width:15px;height:1px;background:#fff"></div>
<div class="a" style="left:14px;top:868px;width:1px;height:14px;background:#fff"></div>
<div class="a" style="left:29px;top:868px;width:1px;height:15px;background:#000"></div>
<svg class="a" style="left:14px;top:868px" width="16" height="15"><rect x="4" y="3" width="2" height="9" fill="#8c8a8c"/><path d="M11 3V12L6.5 7.5Z" fill="#8c8a8c"/><path d="M11 3V12" stroke="#fff" stroke-width="1"/></svg>
<div class="a" style="left:30px;top:868px;width:16px;height:15px;background:#c8c4c8"></div>
<div class="a" style="left:30px;top:868px;width:15px;height:1px;background:#fff"></div>
<div class="a" style="left:30px;top:868px;width:1px;height:14px;background:#fff"></div>
<div class="a" style="left:45px;top:868px;width:1px;height:15px;background:#000"></div>
<svg class="a" style="left:30px;top:868px" width="16" height="15"><path d="M10 3V12L5 7.5Z" fill="#8c8a8c"/><path d="M10.5 3V12" stroke="#fff" stroke-width="1"/></svg>
<div class="a" style="left:46px;top:868px;width:16px;height:15px;background:#c8c4c8"></div>
<div class="a" style="left:46px;top:868px;width:15px;height:1px;background:#fff"></div>
<div class="a" style="left:46px;top:868px;width:1px;height:14px;background:#fff"></div>
<div class="a" style="left:61px;top:868px;width:1px;height:15px;background:#000"></div>
<svg class="a" style="left:46px;top:868px" width="16" height="15"><path d="M5 3V12L10 7.5Z" fill="#000"/></svg>
<div class="a" style="left:62px;top:868px;width:16px;height:15px;background:#c8c4c8"></div>
<div class="a" style="left:62px;top:868px;width:15px;height:1px;background:#fff"></div>
<div class="a" style="left:62px;top:868px;width:1px;height:14px;background:#fff"></div>
<div class="a" style="left:77px;top:868px;width:1px;height:15px;background:#000"></div>
<svg class="a" style="left:62px;top:868px" width="16" height="15"><path d="M3 3V12L8 7.5Z" fill="#000"/><rect x="10" y="3" width="2" height="9" fill="#000"/></svg>
<svg class="a" style="left:78px;top:868px" width="200" height="16"><path d="M53 0.5H96.69999999999999L90.69999999999999 15.5H47Z" fill="#c8c4c8" stroke="#000" stroke-width="1"/><path d="M54 1.5H95.69999999999999" stroke="#fff" stroke-width="1"/><text x="71.85" y="12" font-family="Liberation Sans" font-size="8.5" text-anchor="middle" fill="#000">Tabelle2</text><path d="M96.69999999999999 0.5H141.4L135.4 15.5H90.69999999999999Z" fill="#c8c4c8" stroke="#000" stroke-width="1"/><path d="M97.69999999999999 1.5H140.4" stroke="#fff" stroke-width="1"/><text x="116.05" y="12" font-family="Liberation Sans" font-size="8.5" text-anchor="middle" fill="#000">Tabelle3</text><path d="M141.4 0.5H185.7L179.7 15.5H135.4Z" fill="#c8c4c8" stroke="#000" stroke-width="1"/><path d="M142.4 1.5H184.7" stroke="#fff" stroke-width="1"/><text x="160.55" y="12" font-family="Liberation Sans" font-size="8.5" text-anchor="middle" fill="#000">Tabelle4</text><path d="M185.7 0.5H230L224 15.5H179.7Z" fill="#c8c4c8" stroke="#000" stroke-width="1"/><path d="M186.7 1.5H229" stroke="#fff" stroke-width="1"/><text x="204.85" y="12" font-family="Liberation Sans" font-size="8.5" text-anchor="middle" fill="#000">Tabelle5</text><path d="M-0.5 0H53L47 15.5H7.5Z" fill="#fff"/><path d="M0 0L7.5 15.5H47L53 0" fill="none" stroke="#000" stroke-width="1.2"/><text x="26" y="12" font-family="Liberation Sans" font-size="8.5" font-weight="bold" text-anchor="middle" fill="#000">Camping</text></svg>
<div class="a" style="left:277px;top:868px;width:8px;height:15px;background:#c8c4c8"></div>
<div class="a" style="left:277px;top:868px;width:1px;height:15px;background:#000"></div>
<div class="a" style="left:279px;top:868px;width:1px;height:15px;background:#fff"></div>
<div class="a" style="left:283px;top:868px;width:1px;height:15px;background:#000"></div>
<div class="a" style="left:284px;top:868px;width:1px;height:15px;background:#fff"></div>
<div class="a" style="left:285px;top:868px;width:15px;height:15px;background:#c8c4c8"></div>
<div class="a" style="left:285px;top:868px;width:14px;height:1px;background:#fff"></div>
<div class="a" style="left:285px;top:868px;width:1px;height:15px;background:#fff"></div>
<div class="a" style="left:299px;top:868px;width:1px;height:15px;background:#000"></div>
<svg class="a" style="left:285px;top:868px" width="15" height="15"><path d="M9 3V12L4.5 7.5Z" fill="#8c8a8c"/><path d="M9.5 3V12" stroke="#fff"/></svg>
<div class="a" style="left:300px;top:868px;width:929px;height:15px;background:#d0d0d0"></div>
<div class="a" style="left:285px;top:883px;width:962px;height:1px;background:#000"></div>
<div class="a" style="left:300px;top:868px;width:412px;height:15px;background:#c8c4c8"></div>
<div class="a" style="left:300px;top:869px;width:411px;height:1px;background:#fff"></div>
<div class="a" style="left:300px;top:869px;width:1px;height:14px;background:#fff"></div>
<div class="a" style="left:711px;top:868px;width:1px;height:15px;background:#000"></div>
<div class="a" style="left:1229px;top:868px;width:14px;height:15px;background:#c8c4c8"></div>
<div class="a" style="left:1229px;top:868px;width:14px;height:1px;background:#fff"></div>
<div class="a" style="left:1229px;top:868px;width:1px;height:15px;background:#fff"></div>
<div class="a" style="left:1229px;top:882px;width:14px;height:1px;background:#000"></div>
<div class="a" style="left:1243px;top:868px;width:4px;height:16px;background:#000"></div>
<svg class="a" style="left:1229px;top:868px" width="14" height="15"><path d="M5 4V11L9.5 7.5Z" fill="#000"/></svg>
<div class="a" style="left:1247px;top:868px;width:17px;height:16px;background:#c8c4c8"></div>
<div class="a" style="left:1247px;top:166px;width:16px;height:702px;background:#d0d0d0"></div>
<div class="a" style="left:1247px;top:166px;width:16px;height:4px;background:#000"></div>
<div class="a" style="left:1247px;top:170px;width:15px;height:16px;background:#c8c4c8"></div>
<div class="a" style="left:1247px;top:170px;width:15px;height:1px;background:#fff"></div>
<div class="a" style="left:1247px;top:170px;width:1px;height:16px;background:#fff"></div>
<div class="a" style="left:1262px;top:166px;width:1px;height:702px;background:#000"></div>
<div class="a" style="left:1247px;top:185px;width:16px;height:1px;background:#000"></div>
<svg class="a" style="left:1247px;top:170px" width="15" height="15"><path d="M3.5 10H11.5L7.5 5Z" fill="#8c8a8c"/><path d="M3.5 10.5H11.5" stroke="#fff"/></svg>
<div class="a" style="left:1247px;top:186px;width:15px;height:279px;background:#c8c4c8"></div>
<div class="a" style="left:1247px;top:186px;width:15px;height:1px;background:#fff"></div>
<div class="a" style="left:1247px;top:186px;width:1px;height:279px;background:#fff"></div>
<div class="a" style="left:1247px;top:464px;width:16px;height:1px;background:#000"></div>
<div class="a" style="left:1248px;top:853px;width:15px;height:15px;background:#c8c4c8"></div>
<div class="a" style="left:1248px;top:853px;width:14px;height:1px;background:#fff"></div>
<div class="a" style="left:1248px;top:853px;width:1px;height:14px;background:#fff"></div>
<div class="a" style="left:1262px;top:853px;width:1px;height:15px;background:#000"></div>
<div class="a" style="left:1247px;top:867px;width:16px;height:1px;background:#000"></div>
<svg class="a" style="left:1248px;top:853px" width="14" height="14"><path d="M3 5H11L7 9.5Z" fill="#000"/></svg>
<div class="a" style="left:1264px;top:29px;width:1px;height:886px;background:#fff"></div>
<div class="a" style="left:12px;top:884px;width:1253px;height:1px;background:#8c8a8c"></div>
<div class="a" style="left:12px;top:885px;width:1253px;height:1px;background:#fff"></div>
<div class="a" style="left:17px;top:888px;width:255px;height:25px;background:#c8c4c8"></div>
<div class="a" style="left:17px;top:888px;width:254px;height:1px;background:#8c8a8c"></div>
<div class="a" style="left:17px;top:888px;width:1px;height:24px;background:#8c8a8c"></div>
<div class="a" style="left:17px;top:912px;width:255px;height:1px;background:#fff"></div>
<div class="a" style="left:271px;top:888px;width:1px;height:25px;background:#fff"></div>
<div class="a t" style="left:18px;top:895px;width:253px;text-align:left;font-size:14px;letter-spacing:0.2px;color:#000">Tabelle 1 / 16</div>
<div class="a" style="left:276px;top:888px;width:305px;height:25px;background:#c8c4c8"></div>
<div class="a" style="left:276px;top:888px;width:304px;height:1px;background:#8c8a8c"></div>
<div class="a" style="left:276px;top:888px;width:1px;height:24px;background:#8c8a8c"></div>
<div class="a" style="left:276px;top:912px;width:305px;height:1px;background:#fff"></div>
<div class="a" style="left:580px;top:888px;width:1px;height:25px;background:#fff"></div>
<div class="a t" style="left:277px;top:895px;width:303px;text-align:left;font-size:14px;letter-spacing:0.2px;color:#000">TAB_Camping</div>
<div class="a" style="left:585px;top:888px;width:65px;height:25px;background:#c8c4c8"></div>
<div class="a" style="left:585px;top:888px;width:64px;height:1px;background:#8c8a8c"></div>
<div class="a" style="left:585px;top:888px;width:1px;height:24px;background:#8c8a8c"></div>
<div class="a" style="left:585px;top:912px;width:65px;height:1px;background:#fff"></div>
<div class="a" style="left:649px;top:888px;width:1px;height:25px;background:#fff"></div>
<div class="a t" style="left:588px;top:895px;width:59px;text-align:center;font-size:14px;letter-spacing:0.2px;color:#000">150%</div>
<div class="a" style="left:654px;top:888px;width:52px;height:25px;background:#c8c4c8"></div>
<div class="a" style="left:654px;top:888px;width:51px;height:1px;background:#8c8a8c"></div>
<div class="a" style="left:654px;top:888px;width:1px;height:24px;background:#8c8a8c"></div>
<div class="a" style="left:654px;top:912px;width:52px;height:1px;background:#fff"></div>
<div class="a" style="left:705px;top:888px;width:1px;height:25px;background:#fff"></div>
<div class="a" style="left:710px;top:888px;width:36px;height:25px;background:#c8c4c8"></div>
<div class="a" style="left:710px;top:888px;width:35px;height:1px;background:#8c8a8c"></div>
<div class="a" style="left:710px;top:888px;width:1px;height:24px;background:#8c8a8c"></div>
<div class="a" style="left:710px;top:912px;width:36px;height:1px;background:#fff"></div>
<div class="a" style="left:745px;top:888px;width:1px;height:25px;background:#fff"></div>
<div class="a t" style="left:713px;top:895px;width:30px;text-align:center;font-size:14px;letter-spacing:0.2px;color:#000">STD</div>
<div class="a" style="left:750px;top:888px;width:24px;height:25px;background:#c8c4c8"></div>
<div class="a" style="left:750px;top:888px;width:23px;height:1px;background:#8c8a8c"></div>
<div class="a" style="left:750px;top:888px;width:1px;height:24px;background:#8c8a8c"></div>
<div class="a" style="left:750px;top:912px;width:24px;height:1px;background:#fff"></div>
<div class="a" style="left:773px;top:888px;width:1px;height:25px;background:#fff"></div>
<div class="a" style="left:778px;top:888px;width:482px;height:25px;background:#c8c4c8"></div>
<div class="a" style="left:778px;top:888px;width:481px;height:1px;background:#8c8a8c"></div>
<div class="a" style="left:778px;top:888px;width:1px;height:24px;background:#8c8a8c"></div>
<div class="a" style="left:778px;top:912px;width:482px;height:1px;background:#fff"></div>
<div class="a" style="left:1259px;top:888px;width:1px;height:25px;background:#fff"></div>
<div class="a t" style="left:781px;top:895px;width:476px;text-align:center;font-size:14px;letter-spacing:0.2px;color:#000">Summe=0</div>
<svg class="a" style="left:0;top:0" width="0" height="0"><defs><pattern id="dith" width="2" height="2" patternUnits="userSpaceOnUse"><rect width="2" height="2" fill="#fff"/><rect width="1" height="1" fill="#000"/><rect x="1" y="1" width="1" height="1" fill="#000"/></pattern></defs></svg>
<svg class="a" style="left:7px;top:940px" width="62" height="78"><rect x="0" y="0" width="61" height="78" fill="#d4d0d4"/><rect x="0" y="0" width="61" height="1" fill="#fff"/><rect x="0" y="0" width="1" height="78" fill="#fff"/><rect x="1" y="1" width="59" height="1" fill="#f4f4f4"/><rect x="1" y="1" width="1" height="76" fill="#f4f4f4"/><rect x="0" y="77" width="61" height="1" fill="#8c8a8c"/><rect x="60" y="0" width="1" height="78" fill="#8c8a8c"/><rect x="1" y="76" width="59" height="1" fill="#a8a6a8"/><rect x="59" y="1" width="1" height="76" fill="#a8a6a8"/><rect x="4.5" y="4.5" width="52" height="52" fill="none" stroke="#8c8a8c"/><rect x="5.5" y="5.5" width="52" height="52" fill="none" stroke="#f4f4f4"/><rect x="5" y="5" width="51" height="51" fill="#d4d0d4"/><rect x="1" y="60" width="59" height="1" fill="#8c8a8c"/><rect x="1" y="61" width="59" height="1" fill="#fff"/><rect x="11" y="10" width="16" height="16" fill="#000"/><path d="M28 8L30 6V28L28 26Z" fill="#000"/><path d="M9 27H28L30 29H7Z" fill="#000"/><rect x="35" y="10" width="16" height="16" fill="url(#dith)"/><path d="M52 8L54 6V28L52 26Z" fill="#000"/><path d="M33 27H52L54 29H31Z" fill="#000"/><rect x="11" y="34" width="16" height="16" fill="url(#dith)"/><path d="M28 32L30 30V52L28 50Z" fill="#000"/><path d="M9 51H28L30 53H7Z" fill="#000"/><rect x="35" y="34" width="16" height="16" fill="#000"/><path d="M52 32L54 30V52L52 50Z" fill="#000"/><path d="M33 51H52L54 53H31Z" fill="#000"/><text x="31.5" y="73.8" font-family="Liberation Mono" font-size="12.5" letter-spacing="-1.8" text-anchor="middle" fill="#000">xconsole</text><rect x="60" y="62" width="2" height="16" fill="#d4d0d4" opacity="0"/></svg>
<svg class="a" style="left:74px;top:940px" width="62" height="78"><rect x="0" y="0" width="61" height="78" fill="#d4d0d4"/><rect x="0" y="0" width="61" height="1" fill="#fff"/><rect x="0" y="0" width="1" height="78" fill="#fff"/><rect x="1" y="1" width="59" height="1" fill="#f4f4f4"/><rect x="1" y="1" width="1" height="76" fill="#f4f4f4"/><rect x="0" y="77" width="61" height="1" fill="#8c8a8c"/><rect x="60" y="0" width="1" height="78" fill="#8c8a8c"/><rect x="1" y="76" width="59" height="1" fill="#a8a6a8"/><rect x="59" y="1" width="1" height="76" fill="#a8a6a8"/><rect x="4.5" y="4.5" width="52" height="52" fill="none" stroke="#8c8a8c"/><rect x="5.5" y="5.5" width="52" height="52" fill="none" stroke="#f4f4f4"/><rect x="5" y="5" width="51" height="51" fill="#d4d0d4"/><rect x="1" y="60" width="59" height="1" fill="#8c8a8c"/><rect x="1" y="61" width="59" height="1" fill="#fff"/><rect x="11" y="10" width="16" height="16" fill="#000"/><path d="M28 8L30 6V28L28 26Z" fill="#000"/><path d="M9 27H28L30 29H7Z" fill="#000"/><rect x="35" y="10" width="16" height="16" fill="url(#dith)"/><path d="M52 8L54 6V28L52 26Z" fill="#000"/><path d="M33 27H52L54 29H31Z" fill="#000"/><rect x="11" y="34" width="16" height="16" fill="url(#dith)"/><path d="M28 32L30 30V52L28 50Z" fill="#000"/><path d="M9 51H28L30 53H7Z" fill="#000"/><rect x="35" y="34" width="16" height="16" fill="#000"/><path d="M52 32L54 30V52L52 50Z" fill="#000"/><path d="M33 51H52L54 53H31Z" fill="#000"/><text x="31.5" y="73.8" font-family="Liberation Mono" font-size="12.5" letter-spacing="-1.8" text-anchor="middle" fill="#000">ash</text><rect x="60" y="62" width="2" height="16" fill="#d4d0d4" opacity="0"/></svg>
<svg class="a" style="left:141px;top:940px" width="62" height="78"><rect x="0" y="0" width="61" height="78" fill="#d4d0d4"/><rect x="0" y="0" width="61" height="1" fill="#fff"/><rect x="0" y="0" width="1" height="78" fill="#fff"/><rect x="1" y="1" width="59" height="1" fill="#f4f4f4"/><rect x="1" y="1" width="1" height="76" fill="#f4f4f4"/><rect x="0" y="77" width="61" height="1" fill="#8c8a8c"/><rect x="60" y="0" width="1" height="78" fill="#8c8a8c"/><rect x="1" y="76" width="59" height="1" fill="#a8a6a8"/><rect x="59" y="1" width="1" height="76" fill="#a8a6a8"/><rect x="4.5" y="4.5" width="52" height="52" fill="none" stroke="#8c8a8c"/><rect x="5.5" y="5.5" width="52" height="52" fill="none" stroke="#f4f4f4"/><rect x="5" y="5" width="51" height="51" fill="#d4d0d4"/><rect x="1" y="60" width="59" height="1" fill="#8c8a8c"/><rect x="1" y="61" width="59" height="1" fill="#fff"/><rect x="11" y="10" width="16" height="16" fill="#000"/><path d="M28 8L30 6V28L28 26Z" fill="#000"/><path d="M9 27H28L30 29H7Z" fill="#000"/><rect x="35" y="10" width="16" height="16" fill="url(#dith)"/><path d="M52 8L54 6V28L52 26Z" fill="#000"/><path d="M33 27H52L54 29H31Z" fill="#000"/><rect x="11" y="34" width="16" height="16" fill="url(#dith)"/><path d="M28 32L30 30V52L28 50Z" fill="#000"/><path d="M9 51H28L30 53H7Z" fill="#000"/><rect x="35" y="34" width="16" height="16" fill="#000"/><path d="M52 32L54 30V52L52 50Z" fill="#000"/><path d="M33 51H52L54 53H31Z" fill="#000"/><text x="31.5" y="73.8" font-family="Liberation Mono" font-size="12.5" letter-spacing="-1.8" text-anchor="middle" fill="#000">xterm</text><rect x="60" y="62" width="2" height="16" fill="#d4d0d4" opacity="0"/></svg>
<svg class="a" style="left:208px;top:940px" width="62" height="78"><rect x="0" y="0" width="61" height="78" fill="#d4d0d4"/><rect x="0" y="0" width="61" height="1" fill="#fff"/><rect x="0" y="0" width="1" height="78" fill="#fff"/><rect x="1" y="1" width="59" height="1" fill="#f4f4f4"/><rect x="1" y="1" width="1" height="76" fill="#f4f4f4"/><rect x="0" y="77" width="61" height="1" fill="#8c8a8c"/><rect x="60" y="0" width="1" height="78" fill="#8c8a8c"/><rect x="1" y="76" width="59" height="1" fill="#a8a6a8"/><rect x="59" y="1" width="1" height="76" fill="#a8a6a8"/><rect x="4.5" y="4.5" width="52" height="52" fill="none" stroke="#8c8a8c"/><rect x="5.5" y="5.5" width="52" height="52" fill="none" stroke="#f4f4f4"/><rect x="5" y="5" width="51" height="51" fill="#d4d0d4"/><rect x="1" y="60" width="59" height="1" fill="#8c8a8c"/><rect x="1" y="61" width="59" height="1" fill="#fff"/><rect x="11" y="10" width="16" height="16" fill="#000"/><path d="M28 8L30 6V28L28 26Z" fill="#000"/><path d="M9 27H28L30 29H7Z" fill="#000"/><rect x="35" y="10" width="16" height="16" fill="url(#dith)"/><path d="M52 8L54 6V28L52 26Z" fill="#000"/><path d="M33 27H52L54 29H31Z" fill="#000"/><rect x="11" y="34" width="16" height="16" fill="url(#dith)"/><path d="M28 32L30 30V52L28 50Z" fill="#000"/><path d="M9 51H28L30 53H7Z" fill="#000"/><rect x="35" y="34" width="16" height="16" fill="#000"/><path d="M52 32L54 30V52L52 50Z" fill="#000"/><path d="M33 51H52L54 53H31Z" fill="#000"/><text x="3" y="73.8" font-family="Liberation Mono" font-size="12.5" letter-spacing="-1.8"  fill="#000">Periodensy</text><rect x="60" y="62" width="2" height="16" fill="#d4d0d4" opacity="0"/></svg>
<svg class="a" style="left:275px;top:940px" width="62" height="78"><rect x="0" y="0" width="61" height="78" fill="#d4d0d4"/><rect x="0" y="0" width="61" height="1" fill="#fff"/><rect x="0" y="0" width="1" height="78" fill="#fff"/><rect x="1" y="1" width="59" height="1" fill="#f4f4f4"/><rect x="1" y="1" width="1" height="76" fill="#f4f4f4"/><rect x="0" y="77" width="61" height="1" fill="#8c8a8c"/><rect x="60" y="0" width="1" height="78" fill="#8c8a8c"/><rect x="1" y="76" width="59" height="1" fill="#a8a6a8"/><rect x="59" y="1" width="1" height="76" fill="#a8a6a8"/><rect x="4.5" y="4.5" width="52" height="52" fill="none" stroke="#8c8a8c"/><rect x="5.5" y="5.5" width="52" height="52" fill="none" stroke="#f4f4f4"/><rect x="5" y="5" width="51" height="51" fill="#d4d0d4"/><rect x="1" y="60" width="59" height="1" fill="#8c8a8c"/><rect x="1" y="61" width="59" height="1" fill="#fff"/><rect x="5" y="6" width="51" height="50" fill="#000"/><path d="M13 7H39L49 18V54H13Z" fill="#fff"/><path d="M39 7V18H49Z" fill="#ddd" stroke="#888" stroke-width="0.5"/><rect x="17.5" y="12.5" width="26" height="34" fill="none" stroke="#bbb" stroke-width="0.6"/><rect x="17" y="12" width="1.5" height="1.5" fill="#222"/><rect x="30" y="12" width="1.5" height="1.5" fill="#222"/><rect x="17" y="29" width="1.5" height="1.5" fill="#222"/><rect x="43" y="29" width="1.5" height="1.5" fill="#222"/><rect x="30" y="46" width="1.5" height="1.5" fill="#222"/><rect x="43" y="46" width="1.5" height="1.5" fill="#222"/><rect x="17" y="46" width="1.5" height="1.5" fill="#222"/><path d="M22 43L43 22L46 25L25 46Z" fill="#1010c0"/><path d="M22 43L25 46L18 48Z" fill="#e0e080"/><path d="M18 48L20 46L19.5 47.5Z" fill="#000"/><path d="M43 22L45 20L48 23L46 25Z" fill="#c8c8d8"/><text x="3" y="73.8" font-family="Liberation Mono" font-size="12.5" letter-spacing="-1.8"  fill="#000">Zeichnung-</text><rect x="60" y="62" width="2" height="16" fill="#d4d0d4" opacity="0"/></svg>
<svg class="a" style="left:342px;top:940px" width="62" height="78"><rect x="0" y="0" width="61" height="78" fill="#d4d0d4"/><rect x="0" y="0" width="61" height="1" fill="#fff"/><rect x="0" y="0" width="1" height="78" fill="#fff"/><rect x="1" y="1" width="59" height="1" fill="#f4f4f4"/><rect x="1" y="1" width="1" height="76" fill="#f4f4f4"/><rect x="0" y="77" width="61" height="1" fill="#8c8a8c"/><rect x="60" y="0" width="1" height="78" fill="#8c8a8c"/><rect x="1" y="76" width="59" height="1" fill="#a8a6a8"/><rect x="59" y="1" width="1" height="76" fill="#a8a6a8"/><rect x="4.5" y="4.5" width="52" height="52" fill="none" stroke="#8c8a8c"/><rect x="5.5" y="5.5" width="52" height="52" fill="none" stroke="#f4f4f4"/><rect x="5" y="5" width="51" height="51" fill="#d4d0d4"/><rect x="1" y="60" width="59" height="1" fill="#8c8a8c"/><rect x="1" y="61" width="59" height="1" fill="#fff"/><rect x="5" y="6" width="51" height="50" fill="#000"/><path d="M13 7H39L49 18V54H13Z" fill="#fff"/><path d="M39 7V18H49Z" fill="#ddd" stroke="#888" stroke-width="0.5"/><rect x="18" y="15" width="9" height="2" fill="#8c8c8c"/><rect x="27" y="15" width="20" height="0.7" fill="#c8c8c8"/><rect x="18" y="18" width="9" height="2" fill="#8c8c8c"/><rect x="27" y="18" width="20" height="0.7" fill="#c8c8c8"/><rect x="18" y="21" width="9" height="2" fill="#8c8c8c"/><rect x="27" y="21" width="20" height="0.7" fill="#c8c8c8"/><rect x="18" y="24" width="9" height="2" fill="#8c8c8c"/><rect x="27" y="24" width="20" height="0.7" fill="#c8c8c8"/><rect x="18" y="27" width="9" height="2" fill="#8c8c8c"/><rect x="27" y="27" width="20" height="0.7" fill="#c8c8c8"/><rect x="18" y="30" width="9" height="2" fill="#8c8c8c"/><rect x="27" y="30" width="20" height="0.7" fill="#c8c8c8"/><rect x="18" y="33" width="9" height="2" fill="#8c8c8c"/><rect x="27" y="33" width="20" height="0.7" fill="#c8c8c8"/><rect x="18" y="36" width="9" height="2" fill="#8c8c8c"/><rect x="27" y="36" width="20" height="0.7" fill="#c8c8c8"/><rect x="18" y="39" width="9" height="2" fill="#8c8c8c"/><rect x="27" y="39" width="20" height="0.7" fill="#c8c8c8"/><rect x="18" y="42" width="9" height="2" fill="#8c8c8c"/><rect x="27" y="42" width="20" height="0.7" fill="#c8c8c8"/><rect x="18" y="45" width="9" height="2" fill="#8c8c8c"/><rect x="27" y="45" width="20" height="0.7" fill="#c8c8c8"/><rect x="18" y="48" width="9" height="2" fill="#8c8c8c"/><rect x="27" y="48" width="20" height="0.7" fill="#c8c8c8"/><rect x="27" y="14" width="0.7" height="37" fill="#c8c8c8"/><rect x="37" y="14" width="0.7" height="37" fill="#c8c8c8"/><rect x="27" y="41" width="8" height="10" fill="#0000ff"/><rect x="31" y="38" width="5" height="13" fill="#000080"/><rect x="36" y="34" width="5" height="17" fill="#800080"/><rect x="41" y="30" width="5" height="21" fill="#000080"/><text x="3" y="73.8" font-family="Liberation Mono" font-size="12.5" letter-spacing="-1.8"  fill="#000">buecher.sd</text><rect x="60" y="62" width="2" height="16" fill="#d4d0d4" opacity="0"/></svg>
<svg class="a" style="left:409px;top:940px" width="62" height="78"><rect x="0" y="0" width="61" height="78" fill="#d4d0d4"/><rect x="0" y="0" width="61" height="1" fill="#fff"/><rect x="0" y="0" width="1" height="78" fill="#fff"/><rect x="1" y="1" width="59" height="1" fill="#f4f4f4"/><rect x="1" y="1" width="1" height="76" fill="#f4f4f4"/><rect x="0" y="77" width="61" height="1" fill="#8c8a8c"/><rect x="60" y="0" width="1" height="78" fill="#8c8a8c"/><rect x="1" y="76" width="59" height="1" fill="#a8a6a8"/><rect x="59" y="1" width="1" height="76" fill="#a8a6a8"/><rect x="4.5" y="4.5" width="52" height="52" fill="none" stroke="#8c8a8c"/><rect x="5.5" y="5.5" width="52" height="52" fill="none" stroke="#f4f4f4"/><rect x="5" y="5" width="51" height="51" fill="#d4d0d4"/><rect x="1" y="60" width="59" height="1" fill="#8c8a8c"/><rect x="1" y="61" width="59" height="1" fill="#fff"/><rect x="5" y="6" width="51" height="50" fill="#000"/><path d="M13 7H39L49 18V54H13Z" fill="#fff"/><path d="M39 7V18H49Z" fill="#ddd" stroke="#888" stroke-width="0.5"/><rect x="17.5" y="12.5" width="26" height="34" fill="none" stroke="#bbb" stroke-width="0.6"/><rect x="17" y="12" width="1.5" height="1.5" fill="#222"/><rect x="30" y="12" width="1.5" height="1.5" fill="#222"/><rect x="17" y="29" width="1.5" height="1.5" fill="#222"/><rect x="43" y="29" width="1.5" height="1.5" fill="#222"/><rect x="30" y="46" width="1.5" height="1.5" fill="#222"/><rect x="43" y="46" width="1.5" height="1.5" fill="#222"/><rect x="17" y="46" width="1.5" height="1.5" fill="#222"/><path d="M22 43L43 22L46 25L25 46Z" fill="#1010c0"/><path d="M22 43L25 46L18 48Z" fill="#e0e080"/><path d="M18 48L20 46L19.5 47.5Z" fill="#000"/><path d="M43 22L45 20L48 23L46 25Z" fill="#c8c8d8"/><text x="3" y="73.8" font-family="Liberation Mono" font-size="12.5" letter-spacing="-1.8"  fill="#000">008.SDA (s</text><rect x="60" y="62" width="2" height="16" fill="#d4d0d4" opacity="0"/></svg>
<svg class="a" style="left:945px;top:940px" width="62" height="78"><rect x="0" y="0" width="61" height="78" fill="#d4d0d4"/><rect x="0" y="0" width="61" height="1" fill="#fff"/><rect x="0" y="0" width="1" height="78" fill="#fff"/><rect x="1" y="1" width="59" height="1" fill="#f4f4f4"/><rect x="1" y="1" width="1" height="76" fill="#f4f4f4"/><rect x="0" y="77" width="61" height="1" fill="#8c8a8c"/><rect x="60" y="0" width="1" height="78" fill="#8c8a8c"/><rect x="1" y="76" width="59" height="1" fill="#a8a6a8"/><rect x="59" y="1" width="1" height="76" fill="#a8a6a8"/><rect x="4.5" y="4.5" width="52" height="52" fill="none" stroke="#8c8a8c"/><rect x="5.5" y="5.5" width="52" height="52" fill="none" stroke="#f4f4f4"/><rect x="5" y="5" width="51" height="51" fill="#d4d0d4"/><rect x="1" y="60" width="59" height="1" fill="#8c8a8c"/><rect x="1" y="61" width="59" height="1" fill="#fff"/><rect x="11" y="10" width="16" height="16" fill="#000"/><path d="M28 8L30 6V28L28 26Z" fill="#000"/><path d="M9 27H28L30 29H7Z" fill="#000"/><rect x="35" y="10" width="16" height="16" fill="url(#dith)"/><path d="M52 8L54 6V28L52 26Z" fill="#000"/><path d="M33 27H52L54 29H31Z" fill="#000"/><rect x="11" y="34" width="16" height="16" fill="url(#dith)"/><path d="M28 32L30 30V52L28 50Z" fill="#000"/><path d="M9 51H28L30 53H7Z" fill="#000"/><rect x="35" y="34" width="16" height="16" fill="#000"/><path d="M52 32L54 30V52L52 50Z" fill="#000"/><path d="M33 51H52L54 53H31Z" fill="#000"/><text x="31.5" y="73.8" font-family="Liberation Mono" font-size="12.5" letter-spacing="-1.8" text-anchor="middle" fill="#000">KVocTrain</text><rect x="60" y="62" width="2" height="16" fill="#d4d0d4" opacity="0"/></svg>
<svg class="a" style="left:1079px;top:940px" width="62" height="78"><rect x="0" y="0" width="61" height="78" fill="#d4d0d4"/><rect x="0" y="0" width="61" height="1" fill="#fff"/><rect x="0" y="0" width="1" height="78" fill="#fff"/><rect x="1" y="1" width="59" height="1" fill="#f4f4f4"/><rect x="1" y="1" width="1" height="76" fill="#f4f4f4"/><rect x="0" y="77" width="61" height="1" fill="#8c8a8c"/><rect x="60" y="0" width="1" height="78" fill="#8c8a8c"/><rect x="1" y="76" width="59" height="1" fill="#a8a6a8"/><rect x="59" y="1" width="1" height="76" fill="#a8a6a8"/><rect x="4.5" y="4.5" width="52" height="52" fill="none" stroke="#8c8a8c"/><rect x="5.5" y="5.5" width="52" height="52" fill="none" stroke="#f4f4f4"/><rect x="5" y="5" width="51" height="51" fill="#d4d0d4"/><rect x="1" y="60" width="59" height="1" fill="#8c8a8c"/><rect x="1" y="61" width="59" height="1" fill="#fff"/><rect x="5" y="5" width="51" height="51" fill="#d8d8d8"/><path d="M6 33Q8 28 12 27L14 13Q17 18 21 26Q33 25 46 22Q52 19 56 15V27Q50 38 42 45Q34 50 24 49Q13 47 8 42Q5 38 6 33Z" fill="#6c6860"/><path d="M14 13Q17 18 21 26L16 27Z" fill="#8a867c"/><path d="M6 33Q8 29 12 29Q14 35 12 42Q8 41 6 37Z" fill="#3c3a36"/><path d="M12 42Q22 48 38 44" fill="none" stroke="#4a4842" stroke-width="2"/><circle cx="18.5" cy="30" r="4.5" fill="#fff"/><circle cx="19" cy="30" r="2.3" fill="#000"/><circle cx="29.5" cy="31.5" r="5.5" fill="#fff"/><circle cx="30.5" cy="31.5" r="2.8" fill="#000"/><text x="31.5" y="73.8" font-family="Liberation Mono" font-size="12.5" letter-spacing="-1.8" text-anchor="middle" fill="#000">GIMP</text><rect x="60" y="62" width="2" height="16" fill="#d4d0d4" opacity="0"/></svg>
<svg class="a" style="left:1213px;top:940px" width="62" height="78"><rect x="0" y="0" width="61" height="78" fill="#d4d0d4"/><rect x="0" y="0" width="61" height="1" fill="#fff"/><rect x="0" y="0" width="1" height="78" fill="#fff"/><rect x="1" y="1" width="59" height="1" fill="#f4f4f4"/><rect x="1" y="1" width="1" height="76" fill="#f4f4f4"/><rect x="0" y="77" width="61" height="1" fill="#8c8a8c"/><rect x="60" y="0" width="1" height="78" fill="#8c8a8c"/><rect x="1" y="76" width="59" height="1" fill="#a8a6a8"/><rect x="59" y="1" width="1" height="76" fill="#a8a6a8"/><rect x="4.5" y="4.5" width="52" height="52" fill="none" stroke="#8c8a8c"/><rect x="5.5" y="5.5" width="52" height="52" fill="none" stroke="#f4f4f4"/><rect x="5" y="5" width="51" height="51" fill="#d4d0d4"/><rect x="1" y="60" width="59" height="1" fill="#8c8a8c"/><rect x="1" y="61" width="59" height="1" fill="#fff"/><rect x="14" y="14" width="34" height="33" fill="#000"/><path d="M19 19L27 25M16 33L24 32M21 42L27 38M31 45L32 39M43 42L38 37" stroke="#e0e0e0" stroke-width="3"/><circle cx="31" cy="31" r="9" fill="#50b050"/><circle cx="29" cy="29" r="6" fill="#d0e8d0"/><path d="M25 27L34 27L29 35Z" fill="#8c8c8c"/><text x="31.5" y="73.8" font-family="Liberation Mono" font-size="12.5" letter-spacing="-1.8" text-anchor="middle" fill="#000">%c</text><rect x="60" y="62" width="2" height="16" fill="#d4d0d4" opacity="0"/></svg>
<div class="a" style="left:364px;top:64px;width:1px;height:24px;background:#8c8a8c"></div>
<div class="a" style="left:365px;top:64px;width:1px;height:24px;background:#fff"></div>
<div class="a" style="left:487px;top:64px;width:1px;height:24px;background:#8c8a8c"></div>
<div class="a" style="left:488px;top:64px;width:1px;height:24px;background:#fff"></div>
<div class="a" style="left:518px;top:64px;width:1px;height:24px;background:#8c8a8c"></div>
<div class="a" style="left:519px;top:64px;width:1px;height:24px;background:#fff"></div>
<div class="a" style="left:596px;top:64px;width:1px;height:24px;background:#8c8a8c"></div>
<div class="a" style="left:597px;top:64px;width:1px;height:24px;background:#fff"></div>
<div class="a" style="left:673px;top:64px;width:1px;height:24px;background:#8c8a8c"></div>
<div class="a" style="left:674px;top:64px;width:1px;height:24px;background:#fff"></div>
<div class="a" style="left:727px;top:64px;width:1px;height:24px;background:#8c8a8c"></div>
<div class="a" style="left:728px;top:64px;width:1px;height:24px;background:#fff"></div>
<div class="a" style="left:850px;top:64px;width:1px;height:24px;background:#8c8a8c"></div>
<div class="a" style="left:851px;top:64px;width:1px;height:24px;background:#fff"></div>
<div class="a" style="left:881px;top:64px;width:1px;height:24px;background:#8c8a8c"></div>
<div class="a" style="left:882px;top:64px;width:1px;height:24px;background:#fff"></div>
<div class="a" style="left:912px;top:64px;width:1px;height:24px;background:#8c8a8c"></div>
<div class="a" style="left:913px;top:64px;width:1px;height:24px;background:#fff"></div>
<div class="a" style="left:492px;top:64px;width:24px;height:23px;background:#b4b4cc;border:1px solid #10106a"></div>
<svg class="a" style="left:300px;top:58px" width="650" height="36"><g transform="translate(-300,-58)"><path d="M319.5 69.5H326L329 72.5V81.5H319.5Z" fill="#fff" stroke="#000070"/><path d="M325 81H335.5V83H325Z" fill="#000"/><path d="M331 81V74L333 72L334 73L332.5 75V81Z" fill="#000"/><path d="M332 68L334 69L331 74L329.5 73Z" fill="#000"/><path d="M326 77H331V79H326Z" fill="#000"/><path d="M346.5 68.5H353.5L358.5 73.5V80.5L353.5 85.5H346.5L341.5 80.5V73.5Z" fill="#fff"/><path d="M347 70H353L357 74V80L353 84H347L343 80V74Z" fill="#8c8a8c"/><path d="M375.5 68.5H386.5V82.5H375.5Z" fill="#f0f0f0" stroke="#000"/><path d="M377 72H380M377 75H380M377 78H380M381 72H385M381 75H384" stroke="#888" stroke-width="1"/><path d="M386.5 76V81.5H381Z" fill="#400060"/><path d="M383 67H391L387 71Z" fill="#20a040"/><path d="M398.5 69.5H405L408.5 73V80.5H398.5Z" fill="#fff" stroke="#000"/><path d="M405 69.5V73H408.5" fill="none" stroke="#000"/><path d="M420.5 71.5H425L426 72.5H431V80.5H420.5Z" fill="#ffff90" stroke="#000"/><path d="M422 80.5L425 75.5H435.5L432 80.5Z" fill="#808000" stroke="#000"/><path d="M429 70Q432 67 434 71" fill="none" stroke="#000" stroke-width="1.2"/><path d="M433 70H436L434.5 73Z" fill="#000"/><rect x="444" y="69" width="13" height="13" fill="#8c8a8c"/><path d="M444 82.5H458M457.5 69V82.5" stroke="#fff"/><rect x="447" y="70" width="7" height="4" fill="#b0aeb0"/><rect x="465.5" y="69.5" width="10" height="10" fill="#808040" stroke="#000"/><rect x="470.5" y="72.5" width="10" height="9" fill="#808040" stroke="#000"/><rect x="473" y="73" width="5" height="3" fill="#e0e0c0"/><rect x="473" y="78" width="4" height="3" fill="#404020"/><rect x="467" y="70" width="4" height="3" fill="#e0e0c0"/><rect x="497.5" y="68.5" width="10" height="13" fill="#fff" stroke="#000"/><path d="M499 71H505M499 73H502M499 76H505M499 78H505" stroke="#555"/><rect x="501" y="72" width="3" height="3" fill="#000080"/><path d="M503 80L510 72L512 74L505 82Z" fill="#000080"/><path d="M503 80L505 82L502 83Z" fill="#a0a040"/><path d="M530.5 67.5H540L542.5 70V82.5H530.5Z" fill="#fff" stroke="#c00000"/><rect x="530" y="78" width="13" height="5" fill="#c00000"/><path d="M540 67.5L542.5 70" stroke="#c06000" stroke-width="2"/><path d="M532 70H536M537 70H539M532 72H534M535 72H539M532 74H535M536 74H540M532 76H538" stroke="#2020c0"/><path d="M532 80.5H534M535.5 80.5H537M538.5 80.5H540.5" stroke="#fff"/><path d="M553.5 68.5H563.5L561.5 73.5H551.5Z" fill="#fff" stroke="#000"/><path d="M554 70.5H560M553 72H559" stroke="#2020a0"/><path d="M550.5 73.5H565.5V81.5H550.5Z" fill="#d0d0d0" stroke="#000"/><path d="M551 77.5H565" stroke="#000"/><rect x="553" y="78" width="8" height="2" fill="#40a040"/><path d="M577 68H587L585 73H575Z" fill="#8c8a8c"/><path d="M573 73H589V81H573Z" fill="#8c8a8c"/><path d="M578 74H585M576 80H582" stroke="#fff"/><circle cx="583" cy="78" r="4" fill="none" stroke="#fff" stroke-width="1.5"/><path d="M586 81L589 84" stroke="#8c8a8c" stroke-width="2"/><path d="M608 68L614 78M615 68L609 78" stroke="#000060" stroke-width="1.2"/><ellipse cx="608.5" cy="80.5" rx="2.3" ry="2.3" fill="none" stroke="#000060" stroke-width="1.2"/><ellipse cx="614.5" cy="80.5" rx="2.3" ry="2.3" fill="none" stroke="#000060" stroke-width="1.2"/><path d="M628.5 68.5H633L634.5 70V76.5H628.5Z" fill="#fff" stroke="#000060" stroke-width="1.2"/><path d="M630 70.5H632M630 72.5H633M630 74.5H633" stroke="#000"/><path d="M634.5 71.5H639L642.5 75V80.5H634.5Z" fill="#fff" stroke="#000060" stroke-width="1.2"/><path d="M636 74.5H639M636 76.5H641M636 78.5H641" stroke="#000"/><path d="M651 70H664V82H651Z" fill="#8c8a8c"/><rect x="655" y="68" width="6" height="3" fill="#8c8a8c"/><path d="M656 71.5H662" stroke="#fff"/><path d="M658.5 74.5H665.5V82.5H658.5Z" fill="none" stroke="#fff"/><path d="M660 77H664M660 79H664" stroke="#8c8a8c"/><path d="M683 73.5H694Q696 73.5 696 76Q696 78.5 694 78.5H686" fill="none" stroke="#8c8a8c" stroke-width="2.2"/><path d="M682 78.5L686 75.5V81.5Z" fill="#8c8a8c"/><path d="M692 67H698L695 70Z" fill="#8c8a8c"/><path d="M684 75.5H694M687 80.5H694" stroke="#fff" stroke-width="0.8"/><path d="M706 73.5H717Q719 73.5 719 76Q719 78.5 717 78.5H709" fill="none" stroke="#8c8a8c" stroke-width="2.2"/><path d="M705 78.5L709 75.5V81.5Z" fill="#8c8a8c"/><path d="M715 67H721L718 70Z" fill="#8c8a8c"/><path d="M707 75.5H717M710 80.5H717" stroke="#fff" stroke-width="0.8"/><path d="M742.5 67L745 73L751 75.5L745 78L742.5 84L740 78L734 75.5L740 73Z" fill="#000"/><path d="M742.5 70V74M742.5 77V81M737 75.5H741M744 75.5H748" stroke="#fff" stroke-width="0.7"/><rect x="741.5" y="74.5" width="2" height="2" fill="#000080"/><rect x="758" y="79" width="3" height="3" fill="#000"/><rect x="765" y="79" width="3" height="3" fill="#000"/><path d="M758 82H769" stroke="#000"/><path d="M766 68H774V76H768Z" fill="#ffffa0"/><path d="M764 78L768 70M765 72L772 71M766 76L773 73" stroke="#000" stroke-width="1"/><path d="M759 73H763M761 71V76" stroke="#8c8a8c" stroke-width="1.2"/><path d="M781.5 68.5H787L789.5 71V79.5H781.5Z" fill="#f4f4f4" stroke="#000"/><path d="M783 72H787M783 74H786M783 76H787" stroke="#888"/><circle cx="790" cy="78" r="5" fill="#20a040"/><path d="M787 75Q790 78 787 80M791 74Q794 77 793 81" stroke="#1040a0" stroke-width="2" fill="none"/><path d="M806 69V73M804 71H808" stroke="#8c8a8c" stroke-width="1.2"/><path d="M813 73L816 70Q818 69 819 71Q820 73 818 74L815 77" fill="none" stroke="#000" stroke-width="1.8"/><path d="M811 76L808 79Q806 81 807.5 82Q809 83 811 81L813 78" fill="none" stroke="#000" stroke-width="1.8"/><path d="M810 79L815 74" stroke="#000" stroke-width="1.2"/><rect x="828.5" y="68.5" width="14" height="11" fill="#000"/><rect x="830" y="70" width="11" height="8" fill="#60c8c8"/><path d="M832 71L839 77" stroke="#a0e8e8" stroke-width="1.5"/><rect x="832" y="80" width="7" height="1" fill="#000"/><rect x="829" y="82" width="13" height="1.5" fill="#000"/><circle cx="867.5" cy="77" r="4.5" fill="#a00000"/><path d="M894 70L897 67L900 70" fill="none" stroke="#000"/><rect x="889.5" y="70.5" width="15" height="11" fill="#f0f040" stroke="#806000"/><rect x="891" y="72" width="12" height="8" fill="#70d8e8"/><rect x="891" y="77" width="12" height="3" fill="#30a030"/><path d="M893 80L897 73L901 80Z" fill="#fff" stroke="#a00000"/><rect x="890" y="80" width="14" height="2" fill="#202020"/><path d="M922.5 72.5H926L927 73.5H934.5V81.5H922.5Z" fill="#8c8a8c" stroke="#000"/><path d="M922.5 74.5H934.5" stroke="#000"/><rect x="924" y="77" width="3" height="1" fill="#000"/><path d="M928 70Q931 67 934 70" fill="none" stroke="#000" stroke-width="1.2"/><path d="M926 69H929L928 72Z" fill="#000"/></g></svg>
<div class="a" style="left:332px;top:100px;width:1px;height:24px;background:#8c8a8c"></div>
<div class="a" style="left:333px;top:100px;width:1px;height:24px;background:#fff"></div>
<div class="a" style="left:433px;top:100px;width:1px;height:24px;background:#8c8a8c"></div>
<div class="a" style="left:434px;top:100px;width:1px;height:24px;background:#fff"></div>
<div class="a" style="left:556px;top:100px;width:1px;height:24px;background:#8c8a8c"></div>
<div class="a" style="left:557px;top:100px;width:1px;height:24px;background:#fff"></div>
<div class="a" style="left:610px;top:100px;width:1px;height:24px;background:#8c8a8c"></div>
<div class="a" style="left:611px;top:100px;width:1px;height:24px;background:#fff"></div>
<div class="a" style="left:664px;top:100px;width:1px;height:24px;background:#8c8a8c"></div>
<div class="a" style="left:665px;top:100px;width:1px;height:24px;background:#fff"></div>
<div class="a" style="left:715px;top:100px;width:23px;height:23px;background:#acacc8;border:1px solid #10106a"></div>
<svg class="a" style="left:230px;top:94px" width="520" height="36"><g transform="translate(-230,-94)"><path d="M243 106H254V109.5H252.5L251.5 108H248.5V110H252V111.8H248.5V113.8H250.5V115.5H243V113.8H245V108H243Z" fill="#000"/><text x="267" y="116" font-family="Liberation Serif" font-weight="bold" font-style="italic" font-size="16" fill="#000">k</text><text x="289.5" y="114" font-family="Liberation Sans" font-weight="bold" font-size="12" fill="#000">U</text><rect x="289" y="116" width="11" height="1.3" fill="#000"/><text x="311" y="113.5" font-family="Liberation Serif" font-weight="bold" font-size="14" fill="#000">A</text><rect x="310" y="115" width="17" height="3.5" fill="#000"/><path d="M320 101H327L323.5 104.5Z" fill="#20a040"/><rect x="343" y="107.0" width="12" height="1.3" fill="#000"/><rect x="343" y="109.5" width="8" height="1.3" fill="#000"/><rect x="343" y="112.0" width="12" height="1.3" fill="#000"/><rect x="343" y="114.5" width="8" height="1.3" fill="#000"/><rect x="366" y="107.0" width="12" height="1.3" fill="#000"/><rect x="368" y="109.5" width="8" height="1.3" fill="#000"/><rect x="366" y="112.0" width="12" height="1.3" fill="#000"/><rect x="368" y="114.5" width="8" height="1.3" fill="#000"/><rect x="389" y="107.0" width="12" height="1.3" fill="#000"/><rect x="393" y="109.5" width="8" height="1.3" fill="#000"/><rect x="389" y="112.0" width="12" height="1.3" fill="#000"/><rect x="393" y="114.5" width="8" height="1.3" fill="#000"/><rect x="412" y="107.0" width="12" height="1.3" fill="#000"/><rect x="412" y="109.5" width="12" height="1.3" fill="#000"/><rect x="412" y="112.0" width="12" height="1.3" fill="#000"/><rect x="412" y="114.5" width="12" height="1.3" fill="#000"/><path d="M444 113H450M447 111L444 113L447 115" fill="none" stroke="#000" stroke-width="1"/><path d="M450 104H454V114H449Z" fill="#b8c040" stroke="#404000" stroke-width="0.8"/><text x="465" y="117" font-family="Liberation Sans" font-weight="bold" font-size="14" fill="#000">%</text><text x="487" y="112" font-family="Liberation Sans" font-weight="bold" font-size="9" fill="#000">$%</text><path d="M490 116H500M490 116L492 114M490 116L492 118" stroke="#000080" stroke-width="1"/><text x="513" y="110" font-family="Liberation Sans" font-size="7" fill="#000080">0</text><path d="M517 105H522V109" stroke="#000080" fill="none"/><text x="511" y="118" font-family="Liberation Sans" font-weight="bold" font-size="7" fill="#000">.000</text><text x="534" y="110" font-family="Liberation Sans" font-weight="bold" font-size="7" fill="#000">.000</text><text x="536" y="118" font-family="Liberation Sans" font-size="7" fill="#000">0</text><path d="M541 116H547V112" stroke="#000080" fill="none"/><rect x="572" y="104" width="1.2" height="17" fill="#000"/><rect x="570" y="107" width="10" height="1.5" fill="#000"/><rect x="573" y="109.5" width="7" height="2" fill="#000"/><rect x="573" y="112.5" width="4" height="1.5" fill="#000"/><rect x="570" y="115" width="10" height="1.5" fill="#000"/><path d="M564 111L567 108.5V113.5Z" fill="#000080"/><rect x="566" y="110.5" width="5" height="1.2" fill="#000080"/><rect x="594" y="104" width="1.2" height="17" fill="#000"/><rect x="592" y="107" width="10" height="1.5" fill="#000"/><rect x="595" y="109.5" width="7" height="2" fill="#000"/><rect x="595" y="112.5" width="4" height="1.5" fill="#000"/><rect x="592" y="115" width="10" height="1.5" fill="#000"/><path d="M593 111L590 108.5V113.5Z" fill="#000080"/><rect x="586" y="110.5" width="5" height="1.2" fill="#000080"/><rect x="620.5" y="106" width="11" height="10.5" fill="none" stroke="#000" stroke-width="1.2"/><path d="M628 103H635L631.5 106.5Z" fill="#20a040"/><rect x="642" y="104" width="15" height="3" fill="#000080"/><rect x="642" y="104" width="2" height="11" fill="#000080"/><rect x="645" y="108" width="2" height="3" fill="#a000a0"/><rect x="642" y="116" width="16" height="4" fill="#fff"/><path d="M650 103H657L653.5 106.5Z" fill="#20a040"/><rect x="674" y="105" width="11" height="12" fill="#fff"/><rect x="672" y="104" width="1" height="15" fill="#8c8a8c"/><rect x="685" y="104" width="1" height="15" fill="#8c8a8c"/><rect x="672" y="106" width="14" height="1" fill="#8c8a8c"/><rect x="672" y="116" width="14" height="1" fill="#8c8a8c"/><rect x="674" y="108" width="4" height="1.5" fill="#000"/><rect x="674" y="110" width="6" height="1.5" fill="#000"/><path d="M682.5 115V109M680.5 110.5L682.5 108L684.5 110.5" stroke="#000" stroke-width="1.3" fill="none"/><rect x="697" y="105" width="11" height="12" fill="#fff"/><rect x="695" y="104" width="1" height="15" fill="#8c8a8c"/><rect x="708" y="104" width="1" height="15" fill="#8c8a8c"/><rect x="695" y="106" width="14" height="1" fill="#8c8a8c"/><rect x="695" y="116" width="14" height="1" fill="#8c8a8c"/><rect x="697" y="110" width="6" height="1.5" fill="#000"/><rect x="697" y="112" width="6" height="1.5" fill="#000"/><path d="M705.5 108V116M703.5 109.5L705.5 107.5L707.5 109.5M703.5 114.5L705.5 116.5L707.5 114.5" stroke="#000" stroke-width="1.3" fill="none"/><rect x="721" y="105" width="11" height="12" fill="#fff"/><rect x="719" y="104" width="1" height="15" fill="#8c8a8c"/><rect x="732" y="104" width="1" height="15" fill="#8c8a8c"/><rect x="719" y="106" width="14" height="1" fill="#8c8a8c"/><rect x="719" y="116" width="14" height="1" fill="#8c8a8c"/><rect x="721" y="113" width="6" height="1.5" fill="#000"/><rect x="721" y="111" width="3" height="1.5" fill="#000"/><path d="M729.5 108V115M727.5 112.5L729.5 115L731.5 112.5" stroke="#000" stroke-width="1.3" fill="none"/></g></svg>
<svg class="a" style="left:180px;top:133px" width="80" height="30"><g transform="translate(-180,-133)"><rect x="188.5" y="143.5" width="13" height="8" rx="1.5" fill="#fff" stroke="#000" stroke-width="1.2"/><path d="M190 145.5H200M190 148H193M195 148H200M196 150H199" stroke="#000"/><text x="211" y="154" font-family="Liberation Serif" font-weight="bold" font-size="15" fill="#000">Σ</text><rect x="236" y="145" width="9" height="1.5" fill="#000"/><rect x="236" y="149" width="9" height="1.5" fill="#000"/></g></svg>
</body></html>
